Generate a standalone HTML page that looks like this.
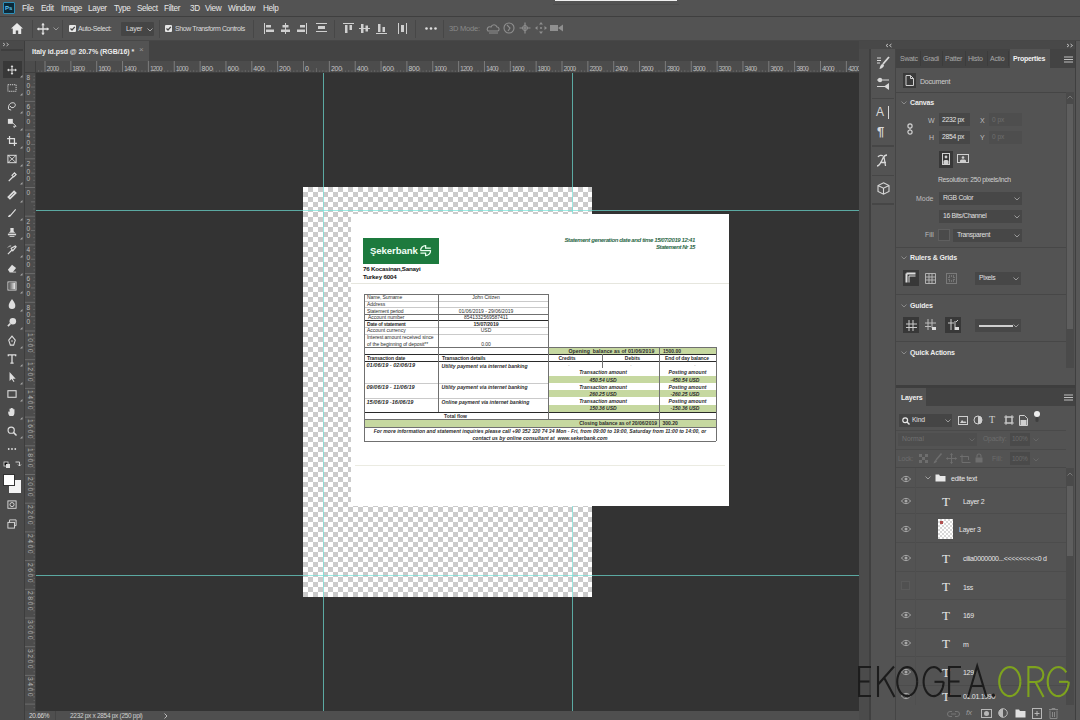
<!DOCTYPE html><html><head><meta charset="utf-8"><style>
*{margin:0;padding:0;box-sizing:border-box}
html,body{width:1080px;height:720px;overflow:hidden;background:#535353;font-family:"Liberation Sans",sans-serif;color:#ddd;position:relative}
.a{position:absolute}
.t{position:absolute;white-space:nowrap;line-height:1}
svg{position:absolute;overflow:visible}
</style></head><body><div class="a" style="left:0px;top:0px;width:1080px;height:16px;background:#535353;"></div>
<div class="a" style="left:0px;top:16px;width:1080px;height:1px;background:#3f3f3f;"></div>
<div class="a" style="left:0px;top:17px;width:1080px;height:23px;background:#535353;"></div>
<div class="a" style="left:0px;top:40px;width:1080px;height:1px;background:#474747;"></div>
<div class="a" style="left:3px;top:2px;width:12px;height:12px;background:#0b2a3a;border:1px solid #2d8fb8;border-radius:1px"></div>
<div class="t" style="left:5px;top:5px;font-size:6px;color:#5fc8f5;font-weight:bold">Ps</div>
<div class="t" style="left:22px;top:4.8px;font-size:8.2px;color:#e8e8e8;letter-spacing:-0.35px">File</div>
<div class="t" style="left:41px;top:4.8px;font-size:8.2px;color:#e8e8e8;letter-spacing:-0.35px">Edit</div>
<div class="t" style="left:61px;top:4.8px;font-size:8.2px;color:#e8e8e8;letter-spacing:-0.35px">Image</div>
<div class="t" style="left:88px;top:4.8px;font-size:8.2px;color:#e8e8e8;letter-spacing:-0.35px">Layer</div>
<div class="t" style="left:114px;top:4.8px;font-size:8.2px;color:#e8e8e8;letter-spacing:-0.35px">Type</div>
<div class="t" style="left:137px;top:4.8px;font-size:8.2px;color:#e8e8e8;letter-spacing:-0.35px">Select</div>
<div class="t" style="left:164px;top:4.8px;font-size:8.2px;color:#e8e8e8;letter-spacing:-0.35px">Filter</div>
<div class="t" style="left:190px;top:4.8px;font-size:8.2px;color:#e8e8e8;letter-spacing:-0.35px">3D</div>
<div class="t" style="left:205px;top:4.8px;font-size:8.2px;color:#e8e8e8;letter-spacing:-0.35px">View</div>
<div class="t" style="left:228px;top:4.8px;font-size:8.2px;color:#e8e8e8;letter-spacing:-0.35px">Window</div>
<div class="t" style="left:263px;top:4.8px;font-size:8.2px;color:#e8e8e8;letter-spacing:-0.35px">Help</div>
<div class="a" style="left:555px;top:0px;width:122px;height:1.4px;background:#f0f0f0;"></div>
<div class="a" style="left:553px;top:4px;width:126px;height:1px;background:#4c4c4c;"></div>
<svg style="left:11px;top:23px;" width="12" height="11" viewBox="0 0 12 11"><path d="M6 0 L0 5.5 H1.8 V11 H4.8 V7.5 H7.2 V11 H10.2 V5.5 H12 Z" fill="#e8e8e8"/></svg>
<div class="a" style="left:32px;top:20px;width:1px;height:18px;background:#474747;"></div>
<svg style="left:37px;top:23px;" width="12" height="12" viewBox="0 0 12 12"><path d="M6 0.5V11.5M0.5 6H11.5" stroke="#e0e0e0" stroke-width="1.3"/><path d="M6 0 L4.2 2.2H7.8Z M6 12 L4.2 9.8H7.8Z M0 6 L2.2 4.2V7.8Z M12 6 L9.8 4.2V7.8Z" fill="#e0e0e0"/></svg>
<svg style="left:53px;top:27px;" width="6" height="4" viewBox="0 0 6 4"><path d="M0.5 0.5 L3 3 L5.5 0.5" stroke="#999" stroke-width="1" fill="none"/></svg>
<div class="a" style="left:62px;top:20px;width:1px;height:18px;background:#474747;"></div>
<div class="a" style="left:69px;top:25px;width:7px;height:7px;background:#e6e6e6;border-radius:1px"></div>
<svg style="left:69px;top:25px;" width="7" height="7" viewBox="0 0 7 7"><path d="M1.5 3.5 L3 5 L5.8 1.8" stroke="#444" stroke-width="1.2" fill="none"/></svg>
<div class="t" style="left:78px;top:25px;font-size:7px;color:#dcdcdc;letter-spacing:-0.4px">Auto-Select:</div>
<div class="a" style="left:121px;top:22px;width:33px;height:14px;background:#454545;border-radius:1px"></div>
<div class="t" style="left:126px;top:25px;font-size:7px;color:#dcdcdc;letter-spacing:-0.3px">Layer</div>
<svg style="left:147px;top:28px;" width="6" height="4" viewBox="0 0 6 4"><path d="M0.5 0.5 L3 3 L5.5 0.5" stroke="#aaa" stroke-width="1" fill="none"/></svg>
<div class="a" style="left:159px;top:20px;width:1px;height:18px;background:#474747;"></div>
<div class="a" style="left:165px;top:25px;width:7px;height:7px;background:#e6e6e6;border-radius:1px"></div>
<svg style="left:165px;top:25px;" width="7" height="7" viewBox="0 0 7 7"><path d="M1.5 3.5 L3 5 L5.8 1.8" stroke="#444" stroke-width="1.2" fill="none"/></svg>
<div class="t" style="left:175px;top:25px;font-size:7px;color:#dcdcdc;letter-spacing:-0.4px">Show Transform Controls</div>
<div class="a" style="left:253px;top:20px;width:1px;height:18px;background:#474747;"></div>
<svg style="left:264px;top:23px;" width="11" height="11" viewBox="0 0 11 11"><rect x="0" y="0" width="1" height="11" fill="#cfcfcf"/><rect x="2" y="2" width="5" height="2.5" fill="#cfcfcf"/><rect x="2" y="6.5" width="8" height="2.5" fill="#cfcfcf"/></svg>
<svg style="left:280px;top:23px;" width="11" height="11" viewBox="0 0 11 11"><rect x="5" y="0" width="1" height="11" fill="#cfcfcf"/><rect x="2.5" y="2" width="6" height="2.5" fill="#cfcfcf"/><rect x="1" y="6.5" width="9" height="2.5" fill="#cfcfcf"/></svg>
<svg style="left:296px;top:23px;" width="11" height="11" viewBox="0 0 11 11"><rect x="10" y="0" width="1" height="11" fill="#cfcfcf"/><rect x="4" y="2" width="5" height="2.5" fill="#cfcfcf"/><rect x="1" y="6.5" width="8" height="2.5" fill="#cfcfcf"/></svg>
<svg style="left:316px;top:23px;" width="11" height="11" viewBox="0 0 11 11"><rect x="0" y="0" width="11" height="1" fill="#cfcfcf"/><rect x="2" y="3" width="7" height="3" fill="#cfcfcf"/><rect x="0" y="8" width="11" height="1" fill="#cfcfcf"/></svg>
<svg style="left:343px;top:23px;" width="11" height="11" viewBox="0 0 11 11"><rect x="0" y="0" width="11" height="1" fill="#cfcfcf"/><rect x="2" y="2" width="2.5" height="8" fill="#cfcfcf"/><rect x="6.5" y="2" width="2.5" height="5" fill="#cfcfcf"/></svg>
<svg style="left:359px;top:23px;" width="11" height="11" viewBox="0 0 11 11"><rect x="0" y="5" width="11" height="1" fill="#cfcfcf"/><rect x="2" y="1" width="2.5" height="9" fill="#cfcfcf"/><rect x="6.5" y="2.5" width="2.5" height="6" fill="#cfcfcf"/></svg>
<svg style="left:376px;top:23px;" width="11" height="11" viewBox="0 0 11 11"><rect x="0" y="10" width="11" height="1" fill="#cfcfcf"/><rect x="2" y="1" width="2.5" height="8" fill="#cfcfcf"/><rect x="6.5" y="4" width="2.5" height="5" fill="#cfcfcf"/></svg>
<svg style="left:398px;top:23px;" width="11" height="11" viewBox="0 0 11 11"><rect x="0" y="0" width="1" height="11" fill="#cfcfcf"/><rect x="3" y="2" width="3" height="7" fill="#cfcfcf"/><rect x="8" y="0" width="1" height="11" fill="#cfcfcf"/></svg>
<div class="a" style="left:334px;top:20px;width:1px;height:18px;background:#474747;"></div>
<div class="a" style="left:415px;top:20px;width:1px;height:18px;background:#474747;"></div>
<svg style="left:425px;top:27px;" width="12" height="3" viewBox="0 0 12 3"><circle cx="1.5" cy="1.5" r="1.3" fill="#e0e0e0"/><circle cx="6" cy="1.5" r="1.3" fill="#e0e0e0"/><circle cx="10.5" cy="1.5" r="1.3" fill="#e0e0e0"/></svg>
<div class="a" style="left:443px;top:20px;width:1px;height:18px;background:#474747;"></div>
<div class="t" style="left:449px;top:25px;font-size:7.5px;color:#8a8a8a;letter-spacing:-0.2px">3D Mode:</div>
<svg style="left:486px;top:23px;" width="14" height="12" viewBox="0 0 14 12"><path d="M2 8 C0 6 2 3 5 4 C6 1 10 1 11 4 C13 4 14 7 12 8 Z" stroke="#8f8f8f" fill="none" stroke-width="1.1"/><path d="M3 10 L12 10" stroke="#8f8f8f" stroke-width="1"/></svg>
<svg style="left:503px;top:22px;" width="12" height="12" viewBox="0 0 12 12"><circle cx="6" cy="6" r="5" stroke="#8f8f8f" fill="none" stroke-width="1.1"/><path d="M4 3 L7 6 L5 9" stroke="#8f8f8f" fill="none" stroke-width="1.1"/></svg>
<svg style="left:519px;top:22px;" width="12" height="12" viewBox="0 0 12 12"><path d="M6 0.5V11.5M0.5 6H11.5" stroke="#8f8f8f" stroke-width="1.2"/><circle cx="6" cy="6" r="2.5" stroke="#8f8f8f" fill="none"/></svg>
<svg style="left:535px;top:22px;" width="12" height="12" viewBox="0 0 12 12"><path d="M6 0 L4 2.5H8Z M6 12 L4 9.5H8Z M0 6 L2.5 4V8Z M12 6 L9.5 4V8Z" fill="#8f8f8f"/><circle cx="6" cy="6" r="1" fill="#8f8f8f"/></svg>
<svg style="left:550px;top:24px;" width="14" height="8" viewBox="0 0 14 8"><rect x="0" y="1" width="8" height="6" fill="#8f8f8f"/><path d="M8 4 L13 0.5 V7.5Z" fill="#8f8f8f"/></svg>
<div class="a" style="left:0px;top:41px;width:24px;height:679px;background:#4a4a4a;"></div>
<div class="a" style="left:24px;top:41px;width:1px;height:679px;background:#3d3d3d;"></div>
<div class="a" style="left:25px;top:41px;width:834px;height:20px;background:#434343;"></div>
<div class="a" style="left:25px;top:41px;width:124px;height:20px;background:#535353;"></div>
<div class="t" style="left:32px;top:47.8px;font-size:7px;color:#ececec;font-weight:bold;letter-spacing:-0.05px">Italy id.psd @ 20.7% (RGB/16) *</div>
<div class="t" style="left:139px;top:46px;font-size:8px;color:#9a9a9a;">&#215;</div>
<div class="a" style="left:25px;top:61px;width:834px;height:12px;background:#4c4c4c;"></div>
<div class="a" style="left:25px;top:73px;width:11px;height:638px;background:#4c4c4c;"></div>
<div class="a" style="left:25px;top:72px;width:834px;height:1px;background:#3e3e3e;"></div>
<div class="a" style="left:35px;top:61px;width:1px;height:650px;background:#3e3e3e;"></div>
<svg style="left:36px;top:61px;" width="823" height="11" viewBox="0 0 823 11"><rect x="2.04" y="9" width="1" height="2" fill="#626262"/><rect x="5.27" y="9.5" width="1" height="1.5" fill="#626262"/><rect x="8.50" y="0" width="1" height="11" fill="#7c7c7c"/><rect x="11.73" y="9.5" width="1" height="1.5" fill="#626262"/><rect x="14.96" y="9" width="1" height="2" fill="#626262"/><rect x="18.19" y="9.5" width="1" height="1.5" fill="#626262"/><rect x="21.42" y="7" width="1" height="4" fill="#6a6a6a"/><rect x="24.66" y="9.5" width="1" height="1.5" fill="#626262"/><rect x="27.89" y="9" width="1" height="2" fill="#626262"/><rect x="31.12" y="9.5" width="1" height="1.5" fill="#626262"/><rect x="34.35" y="0" width="1" height="11" fill="#7c7c7c"/><rect x="37.58" y="9.5" width="1" height="1.5" fill="#626262"/><rect x="40.81" y="9" width="1" height="2" fill="#626262"/><rect x="44.04" y="9.5" width="1" height="1.5" fill="#626262"/><rect x="47.27" y="7" width="1" height="4" fill="#6a6a6a"/><rect x="50.51" y="9.5" width="1" height="1.5" fill="#626262"/><rect x="53.74" y="9" width="1" height="2" fill="#626262"/><rect x="56.97" y="9.5" width="1" height="1.5" fill="#626262"/><rect x="60.20" y="0" width="1" height="11" fill="#7c7c7c"/><rect x="63.43" y="9.5" width="1" height="1.5" fill="#626262"/><rect x="66.66" y="9" width="1" height="2" fill="#626262"/><rect x="69.89" y="9.5" width="1" height="1.5" fill="#626262"/><rect x="73.12" y="7" width="1" height="4" fill="#6a6a6a"/><rect x="76.36" y="9.5" width="1" height="1.5" fill="#626262"/><rect x="79.59" y="9" width="1" height="2" fill="#626262"/><rect x="82.82" y="9.5" width="1" height="1.5" fill="#626262"/><rect x="86.05" y="0" width="1" height="11" fill="#7c7c7c"/><rect x="89.28" y="9.5" width="1" height="1.5" fill="#626262"/><rect x="92.51" y="9" width="1" height="2" fill="#626262"/><rect x="95.74" y="9.5" width="1" height="1.5" fill="#626262"/><rect x="98.97" y="7" width="1" height="4" fill="#6a6a6a"/><rect x="102.21" y="9.5" width="1" height="1.5" fill="#626262"/><rect x="105.44" y="9" width="1" height="2" fill="#626262"/><rect x="108.67" y="9.5" width="1" height="1.5" fill="#626262"/><rect x="111.90" y="0" width="1" height="11" fill="#7c7c7c"/><rect x="115.13" y="9.5" width="1" height="1.5" fill="#626262"/><rect x="118.36" y="9" width="1" height="2" fill="#626262"/><rect x="121.59" y="9.5" width="1" height="1.5" fill="#626262"/><rect x="124.82" y="7" width="1" height="4" fill="#6a6a6a"/><rect x="128.06" y="9.5" width="1" height="1.5" fill="#626262"/><rect x="131.29" y="9" width="1" height="2" fill="#626262"/><rect x="134.52" y="9.5" width="1" height="1.5" fill="#626262"/><rect x="137.75" y="0" width="1" height="11" fill="#7c7c7c"/><rect x="140.98" y="9.5" width="1" height="1.5" fill="#626262"/><rect x="144.21" y="9" width="1" height="2" fill="#626262"/><rect x="147.44" y="9.5" width="1" height="1.5" fill="#626262"/><rect x="150.68" y="7" width="1" height="4" fill="#6a6a6a"/><rect x="153.91" y="9.5" width="1" height="1.5" fill="#626262"/><rect x="157.14" y="9" width="1" height="2" fill="#626262"/><rect x="160.37" y="9.5" width="1" height="1.5" fill="#626262"/><rect x="163.60" y="0" width="1" height="11" fill="#7c7c7c"/><rect x="166.83" y="9.5" width="1" height="1.5" fill="#626262"/><rect x="170.06" y="9" width="1" height="2" fill="#626262"/><rect x="173.29" y="9.5" width="1" height="1.5" fill="#626262"/><rect x="176.53" y="7" width="1" height="4" fill="#6a6a6a"/><rect x="179.76" y="9.5" width="1" height="1.5" fill="#626262"/><rect x="182.99" y="9" width="1" height="2" fill="#626262"/><rect x="186.22" y="9.5" width="1" height="1.5" fill="#626262"/><rect x="189.45" y="0" width="1" height="11" fill="#7c7c7c"/><rect x="192.68" y="9.5" width="1" height="1.5" fill="#626262"/><rect x="195.91" y="9" width="1" height="2" fill="#626262"/><rect x="199.14" y="9.5" width="1" height="1.5" fill="#626262"/><rect x="202.38" y="7" width="1" height="4" fill="#6a6a6a"/><rect x="205.61" y="9.5" width="1" height="1.5" fill="#626262"/><rect x="208.84" y="9" width="1" height="2" fill="#626262"/><rect x="212.07" y="9.5" width="1" height="1.5" fill="#626262"/><rect x="215.30" y="0" width="1" height="11" fill="#7c7c7c"/><rect x="218.53" y="9.5" width="1" height="1.5" fill="#626262"/><rect x="221.76" y="9" width="1" height="2" fill="#626262"/><rect x="224.99" y="9.5" width="1" height="1.5" fill="#626262"/><rect x="228.23" y="7" width="1" height="4" fill="#6a6a6a"/><rect x="231.46" y="9.5" width="1" height="1.5" fill="#626262"/><rect x="234.69" y="9" width="1" height="2" fill="#626262"/><rect x="237.92" y="9.5" width="1" height="1.5" fill="#626262"/><rect x="241.15" y="0" width="1" height="11" fill="#7c7c7c"/><rect x="244.38" y="9.5" width="1" height="1.5" fill="#626262"/><rect x="247.61" y="9" width="1" height="2" fill="#626262"/><rect x="250.84" y="9.5" width="1" height="1.5" fill="#626262"/><rect x="254.07" y="7" width="1" height="4" fill="#6a6a6a"/><rect x="257.31" y="9.5" width="1" height="1.5" fill="#626262"/><rect x="260.54" y="9" width="1" height="2" fill="#626262"/><rect x="263.77" y="9.5" width="1" height="1.5" fill="#626262"/><rect x="267.00" y="0" width="1" height="11" fill="#7c7c7c"/><rect x="270.23" y="9.5" width="1" height="1.5" fill="#626262"/><rect x="273.46" y="9" width="1" height="2" fill="#626262"/><rect x="276.69" y="9.5" width="1" height="1.5" fill="#626262"/><rect x="279.93" y="7" width="1" height="4" fill="#6a6a6a"/><rect x="283.16" y="9.5" width="1" height="1.5" fill="#626262"/><rect x="286.39" y="9" width="1" height="2" fill="#626262"/><rect x="289.62" y="9.5" width="1" height="1.5" fill="#626262"/><rect x="292.85" y="0" width="1" height="11" fill="#7c7c7c"/><rect x="296.08" y="9.5" width="1" height="1.5" fill="#626262"/><rect x="299.31" y="9" width="1" height="2" fill="#626262"/><rect x="302.54" y="9.5" width="1" height="1.5" fill="#626262"/><rect x="305.78" y="7" width="1" height="4" fill="#6a6a6a"/><rect x="309.01" y="9.5" width="1" height="1.5" fill="#626262"/><rect x="312.24" y="9" width="1" height="2" fill="#626262"/><rect x="315.47" y="9.5" width="1" height="1.5" fill="#626262"/><rect x="318.70" y="0" width="1" height="11" fill="#7c7c7c"/><rect x="321.93" y="9.5" width="1" height="1.5" fill="#626262"/><rect x="325.16" y="9" width="1" height="2" fill="#626262"/><rect x="328.39" y="9.5" width="1" height="1.5" fill="#626262"/><rect x="331.62" y="7" width="1" height="4" fill="#6a6a6a"/><rect x="334.86" y="9.5" width="1" height="1.5" fill="#626262"/><rect x="338.09" y="9" width="1" height="2" fill="#626262"/><rect x="341.32" y="9.5" width="1" height="1.5" fill="#626262"/><rect x="344.55" y="0" width="1" height="11" fill="#7c7c7c"/><rect x="347.78" y="9.5" width="1" height="1.5" fill="#626262"/><rect x="351.01" y="9" width="1" height="2" fill="#626262"/><rect x="354.24" y="9.5" width="1" height="1.5" fill="#626262"/><rect x="357.48" y="7" width="1" height="4" fill="#6a6a6a"/><rect x="360.71" y="9.5" width="1" height="1.5" fill="#626262"/><rect x="363.94" y="9" width="1" height="2" fill="#626262"/><rect x="367.17" y="9.5" width="1" height="1.5" fill="#626262"/><rect x="370.40" y="0" width="1" height="11" fill="#7c7c7c"/><rect x="373.63" y="9.5" width="1" height="1.5" fill="#626262"/><rect x="376.86" y="9" width="1" height="2" fill="#626262"/><rect x="380.09" y="9.5" width="1" height="1.5" fill="#626262"/><rect x="383.32" y="7" width="1" height="4" fill="#6a6a6a"/><rect x="386.56" y="9.5" width="1" height="1.5" fill="#626262"/><rect x="389.79" y="9" width="1" height="2" fill="#626262"/><rect x="393.02" y="9.5" width="1" height="1.5" fill="#626262"/><rect x="396.25" y="0" width="1" height="11" fill="#7c7c7c"/><rect x="399.48" y="9.5" width="1" height="1.5" fill="#626262"/><rect x="402.71" y="9" width="1" height="2" fill="#626262"/><rect x="405.94" y="9.5" width="1" height="1.5" fill="#626262"/><rect x="409.18" y="7" width="1" height="4" fill="#6a6a6a"/><rect x="412.41" y="9.5" width="1" height="1.5" fill="#626262"/><rect x="415.64" y="9" width="1" height="2" fill="#626262"/><rect x="418.87" y="9.5" width="1" height="1.5" fill="#626262"/><rect x="422.10" y="0" width="1" height="11" fill="#7c7c7c"/><rect x="425.33" y="9.5" width="1" height="1.5" fill="#626262"/><rect x="428.56" y="9" width="1" height="2" fill="#626262"/><rect x="431.79" y="9.5" width="1" height="1.5" fill="#626262"/><rect x="435.03" y="7" width="1" height="4" fill="#6a6a6a"/><rect x="438.26" y="9.5" width="1" height="1.5" fill="#626262"/><rect x="441.49" y="9" width="1" height="2" fill="#626262"/><rect x="444.72" y="9.5" width="1" height="1.5" fill="#626262"/><rect x="447.95" y="0" width="1" height="11" fill="#7c7c7c"/><rect x="451.18" y="9.5" width="1" height="1.5" fill="#626262"/><rect x="454.41" y="9" width="1" height="2" fill="#626262"/><rect x="457.64" y="9.5" width="1" height="1.5" fill="#626262"/><rect x="460.88" y="7" width="1" height="4" fill="#6a6a6a"/><rect x="464.11" y="9.5" width="1" height="1.5" fill="#626262"/><rect x="467.34" y="9" width="1" height="2" fill="#626262"/><rect x="470.57" y="9.5" width="1" height="1.5" fill="#626262"/><rect x="473.80" y="0" width="1" height="11" fill="#7c7c7c"/><rect x="477.03" y="9.5" width="1" height="1.5" fill="#626262"/><rect x="480.26" y="9" width="1" height="2" fill="#626262"/><rect x="483.49" y="9.5" width="1" height="1.5" fill="#626262"/><rect x="486.73" y="7" width="1" height="4" fill="#6a6a6a"/><rect x="489.96" y="9.5" width="1" height="1.5" fill="#626262"/><rect x="493.19" y="9" width="1" height="2" fill="#626262"/><rect x="496.42" y="9.5" width="1" height="1.5" fill="#626262"/><rect x="499.65" y="0" width="1" height="11" fill="#7c7c7c"/><rect x="502.88" y="9.5" width="1" height="1.5" fill="#626262"/><rect x="506.11" y="9" width="1" height="2" fill="#626262"/><rect x="509.34" y="9.5" width="1" height="1.5" fill="#626262"/><rect x="512.57" y="7" width="1" height="4" fill="#6a6a6a"/><rect x="515.81" y="9.5" width="1" height="1.5" fill="#626262"/><rect x="519.04" y="9" width="1" height="2" fill="#626262"/><rect x="522.27" y="9.5" width="1" height="1.5" fill="#626262"/><rect x="525.50" y="0" width="1" height="11" fill="#7c7c7c"/><rect x="528.73" y="9.5" width="1" height="1.5" fill="#626262"/><rect x="531.96" y="9" width="1" height="2" fill="#626262"/><rect x="535.19" y="9.5" width="1" height="1.5" fill="#626262"/><rect x="538.42" y="7" width="1" height="4" fill="#6a6a6a"/><rect x="541.66" y="9.5" width="1" height="1.5" fill="#626262"/><rect x="544.89" y="9" width="1" height="2" fill="#626262"/><rect x="548.12" y="9.5" width="1" height="1.5" fill="#626262"/><rect x="551.35" y="0" width="1" height="11" fill="#7c7c7c"/><rect x="554.58" y="9.5" width="1" height="1.5" fill="#626262"/><rect x="557.81" y="9" width="1" height="2" fill="#626262"/><rect x="561.04" y="9.5" width="1" height="1.5" fill="#626262"/><rect x="564.27" y="7" width="1" height="4" fill="#6a6a6a"/><rect x="567.51" y="9.5" width="1" height="1.5" fill="#626262"/><rect x="570.74" y="9" width="1" height="2" fill="#626262"/><rect x="573.97" y="9.5" width="1" height="1.5" fill="#626262"/><rect x="577.20" y="0" width="1" height="11" fill="#7c7c7c"/><rect x="580.43" y="9.5" width="1" height="1.5" fill="#626262"/><rect x="583.66" y="9" width="1" height="2" fill="#626262"/><rect x="586.89" y="9.5" width="1" height="1.5" fill="#626262"/><rect x="590.12" y="7" width="1" height="4" fill="#6a6a6a"/><rect x="593.36" y="9.5" width="1" height="1.5" fill="#626262"/><rect x="596.59" y="9" width="1" height="2" fill="#626262"/><rect x="599.82" y="9.5" width="1" height="1.5" fill="#626262"/><rect x="603.05" y="0" width="1" height="11" fill="#7c7c7c"/><rect x="606.28" y="9.5" width="1" height="1.5" fill="#626262"/><rect x="609.51" y="9" width="1" height="2" fill="#626262"/><rect x="612.74" y="9.5" width="1" height="1.5" fill="#626262"/><rect x="615.97" y="7" width="1" height="4" fill="#6a6a6a"/><rect x="619.21" y="9.5" width="1" height="1.5" fill="#626262"/><rect x="622.44" y="9" width="1" height="2" fill="#626262"/><rect x="625.67" y="9.5" width="1" height="1.5" fill="#626262"/><rect x="628.90" y="0" width="1" height="11" fill="#7c7c7c"/><rect x="632.13" y="9.5" width="1" height="1.5" fill="#626262"/><rect x="635.36" y="9" width="1" height="2" fill="#626262"/><rect x="638.59" y="9.5" width="1" height="1.5" fill="#626262"/><rect x="641.83" y="7" width="1" height="4" fill="#6a6a6a"/><rect x="645.06" y="9.5" width="1" height="1.5" fill="#626262"/><rect x="648.29" y="9" width="1" height="2" fill="#626262"/><rect x="651.52" y="9.5" width="1" height="1.5" fill="#626262"/><rect x="654.75" y="0" width="1" height="11" fill="#7c7c7c"/><rect x="657.98" y="9.5" width="1" height="1.5" fill="#626262"/><rect x="661.21" y="9" width="1" height="2" fill="#626262"/><rect x="664.44" y="9.5" width="1" height="1.5" fill="#626262"/><rect x="667.67" y="7" width="1" height="4" fill="#6a6a6a"/><rect x="670.91" y="9.5" width="1" height="1.5" fill="#626262"/><rect x="674.14" y="9" width="1" height="2" fill="#626262"/><rect x="677.37" y="9.5" width="1" height="1.5" fill="#626262"/><rect x="680.60" y="0" width="1" height="11" fill="#7c7c7c"/><rect x="683.83" y="9.5" width="1" height="1.5" fill="#626262"/><rect x="687.06" y="9" width="1" height="2" fill="#626262"/><rect x="690.29" y="9.5" width="1" height="1.5" fill="#626262"/><rect x="693.52" y="7" width="1" height="4" fill="#6a6a6a"/><rect x="696.76" y="9.5" width="1" height="1.5" fill="#626262"/><rect x="699.99" y="9" width="1" height="2" fill="#626262"/><rect x="703.22" y="9.5" width="1" height="1.5" fill="#626262"/><rect x="706.45" y="0" width="1" height="11" fill="#7c7c7c"/><rect x="709.68" y="9.5" width="1" height="1.5" fill="#626262"/><rect x="712.91" y="9" width="1" height="2" fill="#626262"/><rect x="716.14" y="9.5" width="1" height="1.5" fill="#626262"/><rect x="719.38" y="7" width="1" height="4" fill="#6a6a6a"/><rect x="722.61" y="9.5" width="1" height="1.5" fill="#626262"/><rect x="725.84" y="9" width="1" height="2" fill="#626262"/><rect x="729.07" y="9.5" width="1" height="1.5" fill="#626262"/><rect x="732.30" y="0" width="1" height="11" fill="#7c7c7c"/><rect x="735.53" y="9.5" width="1" height="1.5" fill="#626262"/><rect x="738.76" y="9" width="1" height="2" fill="#626262"/><rect x="741.99" y="9.5" width="1" height="1.5" fill="#626262"/><rect x="745.22" y="7" width="1" height="4" fill="#6a6a6a"/><rect x="748.46" y="9.5" width="1" height="1.5" fill="#626262"/><rect x="751.69" y="9" width="1" height="2" fill="#626262"/><rect x="754.92" y="9.5" width="1" height="1.5" fill="#626262"/><rect x="758.15" y="0" width="1" height="11" fill="#7c7c7c"/><rect x="761.38" y="9.5" width="1" height="1.5" fill="#626262"/><rect x="764.61" y="9" width="1" height="2" fill="#626262"/><rect x="767.84" y="9.5" width="1" height="1.5" fill="#626262"/><rect x="771.08" y="7" width="1" height="4" fill="#6a6a6a"/><rect x="774.31" y="9.5" width="1" height="1.5" fill="#626262"/><rect x="777.54" y="9" width="1" height="2" fill="#626262"/><rect x="780.77" y="9.5" width="1" height="1.5" fill="#626262"/><rect x="784.00" y="0" width="1" height="11" fill="#7c7c7c"/><rect x="787.23" y="9.5" width="1" height="1.5" fill="#626262"/><rect x="790.46" y="9" width="1" height="2" fill="#626262"/><rect x="793.69" y="9.5" width="1" height="1.5" fill="#626262"/><rect x="796.92" y="7" width="1" height="4" fill="#6a6a6a"/><rect x="800.16" y="9.5" width="1" height="1.5" fill="#626262"/><rect x="803.39" y="9" width="1" height="2" fill="#626262"/><rect x="806.62" y="9.5" width="1" height="1.5" fill="#626262"/><rect x="809.85" y="0" width="1" height="11" fill="#7c7c7c"/><rect x="813.08" y="9.5" width="1" height="1.5" fill="#626262"/><rect x="816.31" y="9" width="1" height="2" fill="#626262"/><rect x="819.54" y="9.5" width="1" height="1.5" fill="#626262"/></svg>
<div class="t" style="left:46.5px;top:64.6px;font-size:7px;color:#b8b8b8;letter-spacing:-0.95px">2000</div>
<div class="t" style="left:72.3px;top:64.6px;font-size:7px;color:#b8b8b8;letter-spacing:-0.95px">1800</div>
<div class="t" style="left:98.2px;top:64.6px;font-size:7px;color:#b8b8b8;letter-spacing:-0.95px">1600</div>
<div class="t" style="left:124.0px;top:64.6px;font-size:7px;color:#b8b8b8;letter-spacing:-0.95px">1400</div>
<div class="t" style="left:149.9px;top:64.6px;font-size:7px;color:#b8b8b8;letter-spacing:-0.95px">1200</div>
<div class="t" style="left:175.8px;top:64.6px;font-size:7px;color:#b8b8b8;letter-spacing:-0.95px">1000</div>
<div class="t" style="left:201.6px;top:64.6px;font-size:7px;color:#c4c4c4;letter-spacing:-0.2px">800</div>
<div class="t" style="left:227.4px;top:64.6px;font-size:7px;color:#c4c4c4;letter-spacing:-0.2px">600</div>
<div class="t" style="left:253.3px;top:64.6px;font-size:7px;color:#c4c4c4;letter-spacing:-0.2px">400</div>
<div class="t" style="left:279.1px;top:64.6px;font-size:7px;color:#c4c4c4;letter-spacing:-0.2px">200</div>
<div class="t" style="left:305.0px;top:64.6px;font-size:7px;color:#c4c4c4;letter-spacing:-0.2px">0</div>
<div class="t" style="left:330.9px;top:64.6px;font-size:7px;color:#c4c4c4;letter-spacing:-0.2px">200</div>
<div class="t" style="left:356.7px;top:64.6px;font-size:7px;color:#c4c4c4;letter-spacing:-0.2px">400</div>
<div class="t" style="left:382.6px;top:64.6px;font-size:7px;color:#c4c4c4;letter-spacing:-0.2px">600</div>
<div class="t" style="left:408.4px;top:64.6px;font-size:7px;color:#c4c4c4;letter-spacing:-0.2px">800</div>
<div class="t" style="left:434.2px;top:64.6px;font-size:7px;color:#b8b8b8;letter-spacing:-0.95px">1000</div>
<div class="t" style="left:460.1px;top:64.6px;font-size:7px;color:#b8b8b8;letter-spacing:-0.95px">1200</div>
<div class="t" style="left:486.0px;top:64.6px;font-size:7px;color:#b8b8b8;letter-spacing:-0.95px">1400</div>
<div class="t" style="left:511.8px;top:64.6px;font-size:7px;color:#b8b8b8;letter-spacing:-0.95px">1600</div>
<div class="t" style="left:537.6px;top:64.6px;font-size:7px;color:#b8b8b8;letter-spacing:-0.95px">1800</div>
<div class="t" style="left:563.5px;top:64.6px;font-size:7px;color:#b8b8b8;letter-spacing:-0.95px">2000</div>
<div class="t" style="left:589.4px;top:64.6px;font-size:7px;color:#b8b8b8;letter-spacing:-0.95px">2200</div>
<div class="t" style="left:615.2px;top:64.6px;font-size:7px;color:#b8b8b8;letter-spacing:-0.95px">2400</div>
<div class="t" style="left:641.0px;top:64.6px;font-size:7px;color:#b8b8b8;letter-spacing:-0.95px">2600</div>
<div class="t" style="left:666.9px;top:64.6px;font-size:7px;color:#b8b8b8;letter-spacing:-0.95px">2800</div>
<div class="t" style="left:692.8px;top:64.6px;font-size:7px;color:#b8b8b8;letter-spacing:-0.95px">3000</div>
<div class="t" style="left:718.6px;top:64.6px;font-size:7px;color:#b8b8b8;letter-spacing:-0.95px">3200</div>
<div class="t" style="left:744.5px;top:64.6px;font-size:7px;color:#b8b8b8;letter-spacing:-0.95px">3400</div>
<div class="t" style="left:770.3px;top:64.6px;font-size:7px;color:#b8b8b8;letter-spacing:-0.95px">3600</div>
<div class="t" style="left:796.2px;top:64.6px;font-size:7px;color:#b8b8b8;letter-spacing:-0.95px">3800</div>
<div class="t" style="left:822.0px;top:64.6px;font-size:7px;color:#b8b8b8;letter-spacing:-0.95px">4000</div>
<div class="t" style="left:847.9px;top:64.6px;font-size:7px;color:#b8b8b8;letter-spacing:-0.95px">4200</div>
<svg style="left:25px;top:73px;" width="10" height="638" viewBox="0 0 10 638"><rect x="8.5" y="2.79" width="1.5" height="1" fill="#626262"/><rect x="8" y="6.38" width="2" height="1" fill="#626262"/><rect x="8.5" y="9.96" width="1.5" height="1" fill="#626262"/><rect x="6" y="13.55" width="4" height="1" fill="#6a6a6a"/><rect x="8.5" y="17.14" width="1.5" height="1" fill="#626262"/><rect x="8" y="20.72" width="2" height="1" fill="#626262"/><rect x="8.5" y="24.31" width="1.5" height="1" fill="#626262"/><rect x="0" y="27.90" width="10" height="1" fill="#6c6c6c"/><rect x="8.5" y="31.49" width="1.5" height="1" fill="#626262"/><rect x="8" y="35.08" width="2" height="1" fill="#626262"/><rect x="8.5" y="38.66" width="1.5" height="1" fill="#626262"/><rect x="6" y="42.25" width="4" height="1" fill="#6a6a6a"/><rect x="8.5" y="45.84" width="1.5" height="1" fill="#626262"/><rect x="8" y="49.43" width="2" height="1" fill="#626262"/><rect x="8.5" y="53.01" width="1.5" height="1" fill="#626262"/><rect x="0" y="56.60" width="10" height="1" fill="#6c6c6c"/><rect x="8.5" y="60.19" width="1.5" height="1" fill="#626262"/><rect x="8" y="63.78" width="2" height="1" fill="#626262"/><rect x="8.5" y="67.36" width="1.5" height="1" fill="#626262"/><rect x="6" y="70.95" width="4" height="1" fill="#6a6a6a"/><rect x="8.5" y="74.54" width="1.5" height="1" fill="#626262"/><rect x="8" y="78.12" width="2" height="1" fill="#626262"/><rect x="8.5" y="81.71" width="1.5" height="1" fill="#626262"/><rect x="0" y="85.30" width="10" height="1" fill="#6c6c6c"/><rect x="8.5" y="88.89" width="1.5" height="1" fill="#626262"/><rect x="8" y="92.48" width="2" height="1" fill="#626262"/><rect x="8.5" y="96.06" width="1.5" height="1" fill="#626262"/><rect x="6" y="99.65" width="4" height="1" fill="#6a6a6a"/><rect x="8.5" y="103.24" width="1.5" height="1" fill="#626262"/><rect x="8" y="106.83" width="2" height="1" fill="#626262"/><rect x="8.5" y="110.41" width="1.5" height="1" fill="#626262"/><rect x="0" y="114.00" width="10" height="1" fill="#6c6c6c"/><rect x="8.5" y="117.59" width="1.5" height="1" fill="#626262"/><rect x="8" y="121.18" width="2" height="1" fill="#626262"/><rect x="8.5" y="124.76" width="1.5" height="1" fill="#626262"/><rect x="6" y="128.35" width="4" height="1" fill="#6a6a6a"/><rect x="8.5" y="131.94" width="1.5" height="1" fill="#626262"/><rect x="8" y="135.53" width="2" height="1" fill="#626262"/><rect x="8.5" y="139.11" width="1.5" height="1" fill="#626262"/><rect x="0" y="142.70" width="10" height="1" fill="#6c6c6c"/><rect x="8.5" y="146.29" width="1.5" height="1" fill="#626262"/><rect x="8" y="149.88" width="2" height="1" fill="#626262"/><rect x="8.5" y="153.46" width="1.5" height="1" fill="#626262"/><rect x="6" y="157.05" width="4" height="1" fill="#6a6a6a"/><rect x="8.5" y="160.64" width="1.5" height="1" fill="#626262"/><rect x="8" y="164.22" width="2" height="1" fill="#626262"/><rect x="8.5" y="167.81" width="1.5" height="1" fill="#626262"/><rect x="0" y="171.40" width="10" height="1" fill="#6c6c6c"/><rect x="8.5" y="174.99" width="1.5" height="1" fill="#626262"/><rect x="8" y="178.58" width="2" height="1" fill="#626262"/><rect x="8.5" y="182.16" width="1.5" height="1" fill="#626262"/><rect x="6" y="185.75" width="4" height="1" fill="#6a6a6a"/><rect x="8.5" y="189.34" width="1.5" height="1" fill="#626262"/><rect x="8" y="192.93" width="2" height="1" fill="#626262"/><rect x="8.5" y="196.51" width="1.5" height="1" fill="#626262"/><rect x="0" y="200.10" width="10" height="1" fill="#6c6c6c"/><rect x="8.5" y="203.69" width="1.5" height="1" fill="#626262"/><rect x="8" y="207.28" width="2" height="1" fill="#626262"/><rect x="8.5" y="210.86" width="1.5" height="1" fill="#626262"/><rect x="6" y="214.45" width="4" height="1" fill="#6a6a6a"/><rect x="8.5" y="218.04" width="1.5" height="1" fill="#626262"/><rect x="8" y="221.62" width="2" height="1" fill="#626262"/><rect x="8.5" y="225.21" width="1.5" height="1" fill="#626262"/><rect x="0" y="228.80" width="10" height="1" fill="#6c6c6c"/><rect x="8.5" y="232.39" width="1.5" height="1" fill="#626262"/><rect x="8" y="235.98" width="2" height="1" fill="#626262"/><rect x="8.5" y="239.56" width="1.5" height="1" fill="#626262"/><rect x="6" y="243.15" width="4" height="1" fill="#6a6a6a"/><rect x="8.5" y="246.74" width="1.5" height="1" fill="#626262"/><rect x="8" y="250.32" width="2" height="1" fill="#626262"/><rect x="8.5" y="253.91" width="1.5" height="1" fill="#626262"/><rect x="0" y="257.50" width="10" height="1" fill="#6c6c6c"/><rect x="8.5" y="261.09" width="1.5" height="1" fill="#626262"/><rect x="8" y="264.68" width="2" height="1" fill="#626262"/><rect x="8.5" y="268.26" width="1.5" height="1" fill="#626262"/><rect x="6" y="271.85" width="4" height="1" fill="#6a6a6a"/><rect x="8.5" y="275.44" width="1.5" height="1" fill="#626262"/><rect x="8" y="279.02" width="2" height="1" fill="#626262"/><rect x="8.5" y="282.61" width="1.5" height="1" fill="#626262"/><rect x="0" y="286.20" width="10" height="1" fill="#6c6c6c"/><rect x="8.5" y="289.79" width="1.5" height="1" fill="#626262"/><rect x="8" y="293.38" width="2" height="1" fill="#626262"/><rect x="8.5" y="296.96" width="1.5" height="1" fill="#626262"/><rect x="6" y="300.55" width="4" height="1" fill="#6a6a6a"/><rect x="8.5" y="304.14" width="1.5" height="1" fill="#626262"/><rect x="8" y="307.72" width="2" height="1" fill="#626262"/><rect x="8.5" y="311.31" width="1.5" height="1" fill="#626262"/><rect x="0" y="314.90" width="10" height="1" fill="#6c6c6c"/><rect x="8.5" y="318.49" width="1.5" height="1" fill="#626262"/><rect x="8" y="322.07" width="2" height="1" fill="#626262"/><rect x="8.5" y="325.66" width="1.5" height="1" fill="#626262"/><rect x="6" y="329.25" width="4" height="1" fill="#6a6a6a"/><rect x="8.5" y="332.84" width="1.5" height="1" fill="#626262"/><rect x="8" y="336.42" width="2" height="1" fill="#626262"/><rect x="8.5" y="340.01" width="1.5" height="1" fill="#626262"/><rect x="0" y="343.60" width="10" height="1" fill="#6c6c6c"/><rect x="8.5" y="347.19" width="1.5" height="1" fill="#626262"/><rect x="8" y="350.78" width="2" height="1" fill="#626262"/><rect x="8.5" y="354.36" width="1.5" height="1" fill="#626262"/><rect x="6" y="357.95" width="4" height="1" fill="#6a6a6a"/><rect x="8.5" y="361.54" width="1.5" height="1" fill="#626262"/><rect x="8" y="365.12" width="2" height="1" fill="#626262"/><rect x="8.5" y="368.71" width="1.5" height="1" fill="#626262"/><rect x="0" y="372.30" width="10" height="1" fill="#6c6c6c"/><rect x="8.5" y="375.89" width="1.5" height="1" fill="#626262"/><rect x="8" y="379.48" width="2" height="1" fill="#626262"/><rect x="8.5" y="383.06" width="1.5" height="1" fill="#626262"/><rect x="6" y="386.65" width="4" height="1" fill="#6a6a6a"/><rect x="8.5" y="390.24" width="1.5" height="1" fill="#626262"/><rect x="8" y="393.82" width="2" height="1" fill="#626262"/><rect x="8.5" y="397.41" width="1.5" height="1" fill="#626262"/><rect x="0" y="401.00" width="10" height="1" fill="#6c6c6c"/><rect x="8.5" y="404.59" width="1.5" height="1" fill="#626262"/><rect x="8" y="408.18" width="2" height="1" fill="#626262"/><rect x="8.5" y="411.76" width="1.5" height="1" fill="#626262"/><rect x="6" y="415.35" width="4" height="1" fill="#6a6a6a"/><rect x="8.5" y="418.94" width="1.5" height="1" fill="#626262"/><rect x="8" y="422.52" width="2" height="1" fill="#626262"/><rect x="8.5" y="426.11" width="1.5" height="1" fill="#626262"/><rect x="0" y="429.70" width="10" height="1" fill="#6c6c6c"/><rect x="8.5" y="433.29" width="1.5" height="1" fill="#626262"/><rect x="8" y="436.88" width="2" height="1" fill="#626262"/><rect x="8.5" y="440.46" width="1.5" height="1" fill="#626262"/><rect x="6" y="444.05" width="4" height="1" fill="#6a6a6a"/><rect x="8.5" y="447.64" width="1.5" height="1" fill="#626262"/><rect x="8" y="451.23" width="2" height="1" fill="#626262"/><rect x="8.5" y="454.81" width="1.5" height="1" fill="#626262"/><rect x="0" y="458.40" width="10" height="1" fill="#6c6c6c"/><rect x="8.5" y="461.99" width="1.5" height="1" fill="#626262"/><rect x="8" y="465.57" width="2" height="1" fill="#626262"/><rect x="8.5" y="469.16" width="1.5" height="1" fill="#626262"/><rect x="6" y="472.75" width="4" height="1" fill="#6a6a6a"/><rect x="8.5" y="476.34" width="1.5" height="1" fill="#626262"/><rect x="8" y="479.92" width="2" height="1" fill="#626262"/><rect x="8.5" y="483.51" width="1.5" height="1" fill="#626262"/><rect x="0" y="487.10" width="10" height="1" fill="#6c6c6c"/><rect x="8.5" y="490.69" width="1.5" height="1" fill="#626262"/><rect x="8" y="494.27" width="2" height="1" fill="#626262"/><rect x="8.5" y="497.86" width="1.5" height="1" fill="#626262"/><rect x="6" y="501.45" width="4" height="1" fill="#6a6a6a"/><rect x="8.5" y="505.04" width="1.5" height="1" fill="#626262"/><rect x="8" y="508.62" width="2" height="1" fill="#626262"/><rect x="8.5" y="512.21" width="1.5" height="1" fill="#626262"/><rect x="0" y="515.80" width="10" height="1" fill="#6c6c6c"/><rect x="8.5" y="519.39" width="1.5" height="1" fill="#626262"/><rect x="8" y="522.97" width="2" height="1" fill="#626262"/><rect x="8.5" y="526.56" width="1.5" height="1" fill="#626262"/><rect x="6" y="530.15" width="4" height="1" fill="#6a6a6a"/><rect x="8.5" y="533.74" width="1.5" height="1" fill="#626262"/><rect x="8" y="537.32" width="2" height="1" fill="#626262"/><rect x="8.5" y="540.91" width="1.5" height="1" fill="#626262"/><rect x="0" y="544.50" width="10" height="1" fill="#6c6c6c"/><rect x="8.5" y="548.09" width="1.5" height="1" fill="#626262"/><rect x="8" y="551.67" width="2" height="1" fill="#626262"/><rect x="8.5" y="555.26" width="1.5" height="1" fill="#626262"/><rect x="6" y="558.85" width="4" height="1" fill="#6a6a6a"/><rect x="8.5" y="562.44" width="1.5" height="1" fill="#626262"/><rect x="8" y="566.02" width="2" height="1" fill="#626262"/><rect x="8.5" y="569.61" width="1.5" height="1" fill="#626262"/><rect x="0" y="573.20" width="10" height="1" fill="#6c6c6c"/><rect x="8.5" y="576.79" width="1.5" height="1" fill="#626262"/><rect x="8" y="580.38" width="2" height="1" fill="#626262"/><rect x="8.5" y="583.96" width="1.5" height="1" fill="#626262"/><rect x="6" y="587.55" width="4" height="1" fill="#6a6a6a"/><rect x="8.5" y="591.14" width="1.5" height="1" fill="#626262"/><rect x="8" y="594.73" width="2" height="1" fill="#626262"/><rect x="8.5" y="598.31" width="1.5" height="1" fill="#626262"/><rect x="0" y="601.90" width="10" height="1" fill="#6c6c6c"/><rect x="8.5" y="605.49" width="1.5" height="1" fill="#626262"/><rect x="8" y="609.07" width="2" height="1" fill="#626262"/><rect x="8.5" y="612.66" width="1.5" height="1" fill="#626262"/><rect x="6" y="616.25" width="4" height="1" fill="#6a6a6a"/><rect x="8.5" y="619.84" width="1.5" height="1" fill="#626262"/><rect x="8" y="623.42" width="2" height="1" fill="#626262"/><rect x="8.5" y="627.01" width="1.5" height="1" fill="#626262"/><rect x="0" y="630.60" width="10" height="1" fill="#6c6c6c"/><rect x="8.5" y="634.19" width="1.5" height="1" fill="#626262"/><rect x="8" y="637.77" width="2" height="1" fill="#626262"/></svg>
<div class="t" style="left:26.5px;top:75.2px;font-size:6.5px;color:#bdbdbd;">8</div>
<div class="t" style="left:26.5px;top:82.5px;font-size:6.5px;color:#bdbdbd;">0</div>
<div class="t" style="left:26.5px;top:89.8px;font-size:6.5px;color:#bdbdbd;">0</div>
<div class="t" style="left:26.5px;top:103.9px;font-size:6.5px;color:#bdbdbd;">6</div>
<div class="t" style="left:26.5px;top:111.2px;font-size:6.5px;color:#bdbdbd;">0</div>
<div class="t" style="left:26.5px;top:118.5px;font-size:6.5px;color:#bdbdbd;">0</div>
<div class="t" style="left:26.5px;top:132.6px;font-size:6.5px;color:#bdbdbd;">4</div>
<div class="t" style="left:26.5px;top:139.9px;font-size:6.5px;color:#bdbdbd;">0</div>
<div class="t" style="left:26.5px;top:147.2px;font-size:6.5px;color:#bdbdbd;">0</div>
<div class="t" style="left:26.5px;top:161.3px;font-size:6.5px;color:#bdbdbd;">2</div>
<div class="t" style="left:26.5px;top:168.6px;font-size:6.5px;color:#bdbdbd;">0</div>
<div class="t" style="left:26.5px;top:175.9px;font-size:6.5px;color:#bdbdbd;">0</div>
<div class="t" style="left:26.5px;top:190.0px;font-size:6.5px;color:#bdbdbd;">0</div>
<div class="t" style="left:26.5px;top:218.7px;font-size:6.5px;color:#bdbdbd;">2</div>
<div class="t" style="left:26.5px;top:226.0px;font-size:6.5px;color:#bdbdbd;">0</div>
<div class="t" style="left:26.5px;top:233.3px;font-size:6.5px;color:#bdbdbd;">0</div>
<div class="t" style="left:26.5px;top:247.4px;font-size:6.5px;color:#bdbdbd;">4</div>
<div class="t" style="left:26.5px;top:254.7px;font-size:6.5px;color:#bdbdbd;">0</div>
<div class="t" style="left:26.5px;top:262.0px;font-size:6.5px;color:#bdbdbd;">0</div>
<div class="t" style="left:26.5px;top:276.1px;font-size:6.5px;color:#bdbdbd;">6</div>
<div class="t" style="left:26.5px;top:283.4px;font-size:6.5px;color:#bdbdbd;">0</div>
<div class="t" style="left:26.5px;top:290.7px;font-size:6.5px;color:#bdbdbd;">0</div>
<div class="t" style="left:26.5px;top:304.8px;font-size:6.5px;color:#bdbdbd;">8</div>
<div class="t" style="left:26.5px;top:312.1px;font-size:6.5px;color:#bdbdbd;">0</div>
<div class="t" style="left:26.5px;top:319.4px;font-size:6.5px;color:#bdbdbd;">0</div>
<div class="t" style="left:32.5px;top:333.0px;font-size:6.8px;color:#b4b4b4;letter-spacing:1.5px;transform:rotate(90deg);transform-origin:0 0">1000</div>
<div class="t" style="left:32.5px;top:361.7px;font-size:6.8px;color:#b4b4b4;letter-spacing:1.5px;transform:rotate(90deg);transform-origin:0 0">1200</div>
<div class="t" style="left:32.5px;top:390.4px;font-size:6.8px;color:#b4b4b4;letter-spacing:1.5px;transform:rotate(90deg);transform-origin:0 0">1400</div>
<div class="t" style="left:32.5px;top:419.1px;font-size:6.8px;color:#b4b4b4;letter-spacing:1.5px;transform:rotate(90deg);transform-origin:0 0">1600</div>
<div class="t" style="left:32.5px;top:447.8px;font-size:6.8px;color:#b4b4b4;letter-spacing:1.5px;transform:rotate(90deg);transform-origin:0 0">1800</div>
<div class="t" style="left:32.5px;top:476.5px;font-size:6.8px;color:#b4b4b4;letter-spacing:1.5px;transform:rotate(90deg);transform-origin:0 0">2000</div>
<div class="t" style="left:32.5px;top:505.2px;font-size:6.8px;color:#b4b4b4;letter-spacing:1.5px;transform:rotate(90deg);transform-origin:0 0">2200</div>
<div class="t" style="left:32.5px;top:533.9px;font-size:6.8px;color:#b4b4b4;letter-spacing:1.5px;transform:rotate(90deg);transform-origin:0 0">2400</div>
<div class="t" style="left:32.5px;top:562.6px;font-size:6.8px;color:#b4b4b4;letter-spacing:1.5px;transform:rotate(90deg);transform-origin:0 0">2600</div>
<div class="t" style="left:32.5px;top:591.3px;font-size:6.8px;color:#b4b4b4;letter-spacing:1.5px;transform:rotate(90deg);transform-origin:0 0">2800</div>
<div class="t" style="left:32.5px;top:620.0px;font-size:6.8px;color:#b4b4b4;letter-spacing:1.5px;transform:rotate(90deg);transform-origin:0 0">3000</div>
<div class="t" style="left:32.5px;top:648.7px;font-size:6.8px;color:#b4b4b4;letter-spacing:1.5px;transform:rotate(90deg);transform-origin:0 0">3200</div>
<div class="t" style="left:32.5px;top:677.4px;font-size:6.8px;color:#b4b4b4;letter-spacing:1.5px;transform:rotate(90deg);transform-origin:0 0">3400</div>
<div class="a" style="left:36px;top:73px;width:823px;height:638px;background:#333333;"></div>
<div class="a" style="left:0px;top:41px;width:24px;height:8px;background:#4a4a4a;"></div>
<svg style="left:2px;top:42px;" width="8" height="5" viewBox="0 0 8 5"><path d="M1 1 L3 2.5 L1 4 M4.5 1 L6.5 2.5 L4.5 4" stroke="#bbb" fill="none" stroke-width="0.9"/></svg>
<div class="a" style="left:1px;top:49px;width:22px;height:2px;background:#3e3e3e;"></div>
<div class="a" style="left:3px;top:61px;width:19px;height:17px;background:#383838;"></div>
<svg style="left:6.0px;top:64.0px;" width="12" height="12" viewBox="0 0 12 12"><g transform="translate(6 6) scale(0.82) translate(-6 -6)"><path d="M6 1V11M1 6H11" stroke="#dedede" stroke-width="1.3"/><path d="M6 0L4.3 2.3H7.7Z M6 12L4.3 9.7H7.7Z M0 6L2.3 4.3V7.7Z M12 6L9.7 4.3V7.7Z" fill="#dedede"/></g></svg>
<svg style="left:19.5px;top:74.5px;" width="2.5" height="2.5" viewBox="0 0 2.5 2.5"><path d="M2.5 0 V2.5 H0Z" fill="#a8a8a8"/></svg>
<svg style="left:6.0px;top:82.0px;" width="12" height="12" viewBox="0 0 12 12"><g transform="translate(6 6) scale(0.82) translate(-6 -6)"><rect x="1" y="2" width="10" height="8" stroke="#dedede" stroke-dasharray="1.5 1" fill="none" stroke-width="1.1"/></g></svg>
<svg style="left:19.5px;top:92.5px;" width="2.5" height="2.5" viewBox="0 0 2.5 2.5"><path d="M2.5 0 V2.5 H0Z" fill="#a8a8a8"/></svg>
<svg style="left:6.0px;top:100.0px;" width="12" height="12" viewBox="0 0 12 12"><g transform="translate(6 6) scale(0.82) translate(-6 -6)"><path d="M2 10 C1 6 3 2 7 2 C10 2 11 5 9 7 C7 9 4 8 4 6 M2 10 L5 11" stroke="#dedede" fill="none" stroke-width="1.2"/></g></svg>
<svg style="left:19.5px;top:110.5px;" width="2.5" height="2.5" viewBox="0 0 2.5 2.5"><path d="M2.5 0 V2.5 H0Z" fill="#a8a8a8"/></svg>
<svg style="left:6.0px;top:117.0px;" width="12" height="12" viewBox="0 0 12 12"><g transform="translate(6 6) scale(0.82) translate(-6 -6)"><rect x="1" y="1" width="6" height="6" fill="#dedede"/><path d="M6 5 L11 10 L8 10 L9 12" stroke="#dedede" fill="none" stroke-width="1.1"/></g></svg>
<svg style="left:19.5px;top:127.5px;" width="2.5" height="2.5" viewBox="0 0 2.5 2.5"><path d="M2.5 0 V2.5 H0Z" fill="#a8a8a8"/></svg>
<svg style="left:6.0px;top:135.0px;" width="12" height="12" viewBox="0 0 12 12"><g transform="translate(6 6) scale(0.82) translate(-6 -6)"><path d="M3 0V9H12 M0 3H9V12" stroke="#dedede" fill="none" stroke-width="1.5"/></g></svg>
<svg style="left:19.5px;top:145.5px;" width="2.5" height="2.5" viewBox="0 0 2.5 2.5"><path d="M2.5 0 V2.5 H0Z" fill="#a8a8a8"/></svg>
<svg style="left:6.0px;top:153.0px;" width="12" height="12" viewBox="0 0 12 12"><g transform="translate(6 6) scale(0.82) translate(-6 -6)"><rect x="1" y="1.5" width="10" height="9" stroke="#dedede" fill="none" stroke-width="1.2"/><path d="M1 1.5L11 10.5M11 1.5L1 10.5" stroke="#dedede" stroke-width="1"/></g></svg>
<svg style="left:19.5px;top:163.5px;" width="2.5" height="2.5" viewBox="0 0 2.5 2.5"><path d="M2.5 0 V2.5 H0Z" fill="#a8a8a8"/></svg>
<svg style="left:6.0px;top:171.0px;" width="12" height="12" viewBox="0 0 12 12"><g transform="translate(6 6) scale(0.82) translate(-6 -6)"><path d="M2 11 L7 6 M6 4 L9 1 L11 3 L8 6 Z" stroke="#dedede" fill="none" stroke-width="1.5"/></g></svg>
<svg style="left:19.5px;top:181.5px;" width="2.5" height="2.5" viewBox="0 0 2.5 2.5"><path d="M2.5 0 V2.5 H0Z" fill="#a8a8a8"/></svg>
<svg style="left:6.0px;top:189.0px;" width="12" height="12" viewBox="0 0 12 12"><g transform="translate(6 6) scale(0.82) translate(-6 -6)"><path d="M1.5 8.5 L8.5 1.5 L10.5 3.5 L3.5 10.5 Z" stroke="#dedede" fill="none" stroke-width="2"/></g></svg>
<svg style="left:19.5px;top:199.5px;" width="2.5" height="2.5" viewBox="0 0 2.5 2.5"><path d="M2.5 0 V2.5 H0Z" fill="#a8a8a8"/></svg>
<svg style="left:6.0px;top:207.0px;" width="12" height="12" viewBox="0 0 12 12"><g transform="translate(6 6) scale(0.82) translate(-6 -6)"><path d="M1 11 C2 8 3 8 4 8 L10 1 L11 2 L5 9 C4 11 2 11 1 11Z" fill="#dedede"/></g></svg>
<svg style="left:19.5px;top:217.5px;" width="2.5" height="2.5" viewBox="0 0 2.5 2.5"><path d="M2.5 0 V2.5 H0Z" fill="#a8a8a8"/></svg>
<svg style="left:6.0px;top:226.0px;" width="12" height="12" viewBox="0 0 12 12"><g transform="translate(6 6) scale(0.82) translate(-6 -6)"><path d="M4 1H8V5L10 7H2L4 5Z" fill="#dedede"/><rect x="1" y="8" width="10" height="2" fill="#dedede"/><rect x="3" y="11" width="6" height="1" fill="#dedede"/></g></svg>
<svg style="left:19.5px;top:236.5px;" width="2.5" height="2.5" viewBox="0 0 2.5 2.5"><path d="M2.5 0 V2.5 H0Z" fill="#a8a8a8"/></svg>
<svg style="left:6.0px;top:244.0px;" width="12" height="12" viewBox="0 0 12 12"><g transform="translate(6 6) scale(0.82) translate(-6 -6)"><path d="M1 11 L6 6 M5 4 L10 1 L11 2 L7 7Z" stroke="#dedede" fill="none" stroke-width="1.4"/><path d="M1 3 A4 4 0 0 1 5 1" stroke="#dedede" fill="none"/></g></svg>
<svg style="left:19.5px;top:254.5px;" width="2.5" height="2.5" viewBox="0 0 2.5 2.5"><path d="M2.5 0 V2.5 H0Z" fill="#a8a8a8"/></svg>
<svg style="left:6.0px;top:262.0px;" width="12" height="12" viewBox="0 0 12 12"><g transform="translate(6 6) scale(0.82) translate(-6 -6)"><path d="M1 8 L6 2 L11 6 L7 11 H3 Z" fill="#dedede"/><path d="M3 11H11" stroke="#dedede"/></g></svg>
<svg style="left:19.5px;top:272.5px;" width="2.5" height="2.5" viewBox="0 0 2.5 2.5"><path d="M2.5 0 V2.5 H0Z" fill="#a8a8a8"/></svg>
<svg style="left:6.0px;top:280.0px;" width="12" height="12" viewBox="0 0 12 12"><g transform="translate(6 6) scale(0.82) translate(-6 -6)"><rect x="1" y="1" width="10" height="10" fill="none" stroke="#dedede"/><rect x="2" y="2" width="8" height="8" fill="url(#gr)"/><defs><linearGradient id="gr"><stop offset="0" stop-color="#555"/><stop offset="1" stop-color="#eee"/></linearGradient></defs></g></svg>
<svg style="left:19.5px;top:290.5px;" width="2.5" height="2.5" viewBox="0 0 2.5 2.5"><path d="M2.5 0 V2.5 H0Z" fill="#a8a8a8"/></svg>
<svg style="left:6.0px;top:298.0px;" width="12" height="12" viewBox="0 0 12 12"><g transform="translate(6 6) scale(0.82) translate(-6 -6)"><path d="M6 0 C3 4 2 6 2 8 A4 4 0 0 0 10 8 C10 6 9 4 6 0Z" fill="#dedede"/></g></svg>
<svg style="left:19.5px;top:308.5px;" width="2.5" height="2.5" viewBox="0 0 2.5 2.5"><path d="M2.5 0 V2.5 H0Z" fill="#a8a8a8"/></svg>
<svg style="left:6.0px;top:316.0px;" width="12" height="12" viewBox="0 0 12 12"><g transform="translate(6 6) scale(0.82) translate(-6 -6)"><circle cx="7" cy="5" r="4" fill="#dedede"/><path d="M4 8 L1 11" stroke="#dedede" stroke-width="2"/></g></svg>
<svg style="left:19.5px;top:326.5px;" width="2.5" height="2.5" viewBox="0 0 2.5 2.5"><path d="M2.5 0 V2.5 H0Z" fill="#a8a8a8"/></svg>
<svg style="left:6.0px;top:335.0px;" width="12" height="12" viewBox="0 0 12 12"><g transform="translate(6 6) scale(0.82) translate(-6 -6)"><path d="M6 0 L10 5 L8 11 H4 L2 5 Z" stroke="#dedede" fill="none" stroke-width="1.3"/><circle cx="6" cy="6" r="1" fill="#dedede"/></g></svg>
<svg style="left:19.5px;top:345.5px;" width="2.5" height="2.5" viewBox="0 0 2.5 2.5"><path d="M2.5 0 V2.5 H0Z" fill="#a8a8a8"/></svg>
<svg style="left:6.0px;top:353.0px;" width="12" height="12" viewBox="0 0 12 12"><g transform="translate(6 6) scale(0.82) translate(-6 -6)"><path d="M1.5 2.5V1H10.5V2.5 M6 1V11 M4 11H8" stroke="#dedede" fill="none" stroke-width="1.6"/></g></svg>
<svg style="left:19.5px;top:363.5px;" width="2.5" height="2.5" viewBox="0 0 2.5 2.5"><path d="M2.5 0 V2.5 H0Z" fill="#a8a8a8"/></svg>
<svg style="left:6.0px;top:371.0px;" width="12" height="12" viewBox="0 0 12 12"><g transform="translate(6 6) scale(0.82) translate(-6 -6)"><path d="M3 0 V11 L5.5 8.5 L8 12 L9 11.5 L7 8 H10.5 Z" fill="#dedede"/></g></svg>
<svg style="left:19.5px;top:381.5px;" width="2.5" height="2.5" viewBox="0 0 2.5 2.5"><path d="M2.5 0 V2.5 H0Z" fill="#a8a8a8"/></svg>
<svg style="left:6.0px;top:388.0px;" width="12" height="12" viewBox="0 0 12 12"><g transform="translate(6 6) scale(0.82) translate(-6 -6)"><rect x="1" y="2" width="10" height="8" stroke="#dedede" fill="none" stroke-width="1.3"/></g></svg>
<svg style="left:19.5px;top:398.5px;" width="2.5" height="2.5" viewBox="0 0 2.5 2.5"><path d="M2.5 0 V2.5 H0Z" fill="#a8a8a8"/></svg>
<svg style="left:6.0px;top:406.0px;" width="12" height="12" viewBox="0 0 12 12"><g transform="translate(6 6) scale(0.82) translate(-6 -6)"><path d="M3 11 C1 8 1 6 2 5 L3 6 V2 H4.5 V5 V1 H6 V5 V1.5 H7.5 V5 V2.5 H9 V7 C9 9 8 11 7 11Z" fill="#dedede"/></g></svg>
<svg style="left:19.5px;top:416.5px;" width="2.5" height="2.5" viewBox="0 0 2.5 2.5"><path d="M2.5 0 V2.5 H0Z" fill="#a8a8a8"/></svg>
<svg style="left:6.0px;top:425.0px;" width="12" height="12" viewBox="0 0 12 12"><g transform="translate(6 6) scale(0.82) translate(-6 -6)"><circle cx="5" cy="5" r="3.8" stroke="#dedede" fill="none" stroke-width="1.4"/><path d="M8 8 L11.5 11.5" stroke="#dedede" stroke-width="1.8"/></g></svg>
<svg style="left:19.5px;top:435.5px;" width="2.5" height="2.5" viewBox="0 0 2.5 2.5"><path d="M2.5 0 V2.5 H0Z" fill="#a8a8a8"/></svg>
<svg style="left:6.0px;top:443.0px;" width="12" height="12" viewBox="0 0 12 12"><g transform="translate(6 6) scale(0.82) translate(-6 -6)"><circle cx="2" cy="6" r="1.1" fill="#dedede"/><circle cx="6" cy="6" r="1.1" fill="#dedede"/><circle cx="10" cy="6" r="1.1" fill="#dedede"/></g></svg>
<svg style="left:4px;top:462px;" width="6" height="6" viewBox="0 0 6 6"><rect x="0" y="0" width="4" height="4" fill="#111" stroke="#dedede" stroke-width="0.8"/><rect x="2" y="2" width="4" height="4" fill="#dedede"/></svg>
<svg style="left:15px;top:461px;" width="6" height="6" viewBox="0 0 6 6"><path d="M0.5 1 H4.5 V5 M3 3.5 L4.5 5 L6 3.5" stroke="#dedede" fill="none" stroke-width="0.9"/></svg>
<div class="a" style="left:9px;top:480px;width:12px;height:13px;background:#f2f2f2;"></div>
<div class="a" style="left:3px;top:474px;width:12px;height:12px;background:#ffffff;border:1px solid #333"></div>
<svg style="left:6.0px;top:499.0px;" width="12" height="12" viewBox="0 0 12 12"><g transform="translate(6 6) scale(0.82) translate(-6 -6)"><rect x="1" y="1" width="10" height="9" stroke="#dedede" fill="none" stroke-width="1.1"/><circle cx="6" cy="5.5" r="2.5" stroke="#dedede" fill="none" stroke-width="1.1"/></g></svg>
<svg style="left:6.0px;top:518.0px;" width="12" height="12" viewBox="0 0 12 12"><g transform="translate(6 6) scale(0.82) translate(-6 -6)"><rect x="1" y="4" width="8" height="7" stroke="#dedede" fill="none" stroke-width="1.1"/><path d="M3 4 V1 H11 V8 H9" stroke="#dedede" fill="none" stroke-width="1.1"/></g></svg>
<div class="a" style="left:859px;top:41px;width:221px;height:679px;background:#4b4b4b;"></div>
<div class="a" style="left:859px;top:41px;width:221px;height:8px;background:#484848;"></div>
<svg style="left:885px;top:43px;" width="8" height="5" viewBox="0 0 8 5"><path d="M3 1 L1 2.5 L3 4 M6.5 1 L4.5 2.5 L6.5 4" stroke="#c8c8c8" fill="none" stroke-width="0.9"/></svg>
<svg style="left:1066px;top:43px;" width="8" height="5" viewBox="0 0 8 5"><path d="M1 1 L3 2.5 L1 4 M4.5 1 L6.5 2.5 L4.5 4" stroke="#c8c8c8" fill="none" stroke-width="0.9"/></svg>
<div class="a" style="left:869px;top:49px;width:2px;height:671px;background:#404040;"></div>
<div class="a" style="left:871px;top:49px;width:24px;height:671px;background:#535353;"></div>
<div class="a" style="left:895px;top:49px;width:1px;height:671px;background:#454545;"></div>
<div class="a" style="left:872px;top:97.5px;width:22px;height:1.5px;background:#464646;"></div>
<div class="a" style="left:872px;top:145px;width:22px;height:1.5px;background:#464646;"></div>
<div class="a" style="left:872px;top:174.5px;width:22px;height:1.5px;background:#464646;"></div>
<div class="a" style="left:872px;top:203px;width:22px;height:1.5px;background:#464646;"></div>
<svg style="left:876px;top:56px;" width="14" height="14" viewBox="0 0 14 14"><path d="M1 2H5M1 4.5H5M1 7H4" stroke="#d8d8d8" stroke-width="1"/><path d="M13 1 L7 8" stroke="#d8d8d8" stroke-width="1.8"/><path d="M7 8 C5 8 4 10 3.5 13 C6 12.5 8 11 8 9Z" fill="#d8d8d8"/></svg>
<svg style="left:876px;top:77px;" width="14" height="13" viewBox="0 0 14 13"><circle cx="4" cy="3" r="2.2" fill="#d8d8d8"/><path d="M1 3H13M1 9.5H13" stroke="#d8d8d8" stroke-width="1.2"/><path d="M13 6 V13 L8 9.5Z" fill="#d8d8d8"/></svg>
<div class="t" style="left:876px;top:106px;font-size:12px;color:#d8d8d8;letter-spacing:-1px">A</div>
<div class="a" style="left:888px;top:106px;width:1px;height:13px;background:#d8d8d8;"></div>
<div class="t" style="left:877px;top:125px;font-size:13px;color:#d8d8d8;font-weight:bold">&#182;</div>
<svg style="left:876px;top:154px;" width="14" height="13" viewBox="0 0 14 13"><path d="M1 12 C3 12 5 9 7 4 C8 2 9 1 11 1 M8 3 L9.5 12 M2 3 C3 1 6 1 7 2 M4 8.5 H10" stroke="#d8d8d8" fill="none" stroke-width="1.3"/></svg>
<svg style="left:877px;top:182px;" width="13" height="13" viewBox="0 0 13 13"><path d="M6.5 0.8 L12 3.5 V9.5 L6.5 12.2 L1 9.5 V3.5Z M1 3.5 L6.5 6.2 L12 3.5 M6.5 6.2V12.2" stroke="#d8d8d8" fill="none" stroke-width="1.1"/></svg>
<div class="a" style="left:896px;top:49px;width:179px;height:336px;background:#535353;"></div>
<div class="a" style="left:896px;top:49px;width:179px;height:19px;background:#434343;"></div>
<div class="t" style="left:900px;top:55px;font-size:7px;color:#a9a9a9;letter-spacing:-0.25px">Swatc</div>
<div class="t" style="left:923px;top:55px;font-size:7px;color:#a9a9a9;letter-spacing:-0.25px">Gradi</div>
<div class="t" style="left:945px;top:55px;font-size:7px;color:#a9a9a9;letter-spacing:-0.25px">Patter</div>
<div class="t" style="left:968px;top:55px;font-size:7px;color:#a9a9a9;letter-spacing:-0.25px">Histo</div>
<div class="t" style="left:990px;top:55px;font-size:7px;color:#a9a9a9;letter-spacing:-0.25px">Actio</div>
<div class="a" style="left:920px;top:51px;width:1px;height:15px;background:#3c3c3c;"></div>
<div class="a" style="left:942px;top:51px;width:1px;height:15px;background:#3c3c3c;"></div>
<div class="a" style="left:965px;top:51px;width:1px;height:15px;background:#3c3c3c;"></div>
<div class="a" style="left:987px;top:51px;width:1px;height:15px;background:#3c3c3c;"></div>
<div class="a" style="left:1008px;top:51px;width:1px;height:15px;background:#3c3c3c;"></div>
<div class="a" style="left:1010px;top:49px;width:40px;height:19px;background:#535353;"></div>
<div class="t" style="left:1013px;top:55px;font-size:7px;color:#f2f2f2;font-weight:bold;letter-spacing:-0.25px">Properties</div>
<svg style="left:1064px;top:56px;" width="8" height="7" viewBox="0 0 8 7"><path d="M0 1H9M0 3.5H9M0 6H9" stroke="#c0c0c0" stroke-width="1.2"/></svg>
<div class="a" style="left:903px;top:73px;width:13px;height:15px;background:#3a3a3a;"></div>
<svg style="left:905px;top:75px;" width="9" height="11" viewBox="0 0 9 11"><path d="M1 0.5 H5.5 L8.5 3.5 V10.5 H1 Z M5.5 0.5 V3.5 H8.5" stroke="#cfcfcf" fill="none" stroke-width="1"/></svg>
<div class="t" style="left:920px;top:78px;font-size:7px;color:#cfcfcf;letter-spacing:-0.2px">Document</div>
<div class="a" style="left:896px;top:92px;width:170px;height:1px;background:#454545;"></div>
<div class="a" style="left:1066px;top:92px;width:8px;height:276px;background:#4a4a4a;"></div>
<div class="a" style="left:1067px;top:104px;width:6px;height:225px;background:#5e5e5e;"></div>
<svg style="left:1067px;top:95px;" width="6" height="4" viewBox="0 0 6 4"><path d="M0.5 3.5 L3 1 L5.5 3.5" stroke="#777" fill="none"/></svg>
<svg style="left:901px;top:100.5px;" width="6" height="4" viewBox="0 0 6 4"><path d="M0.5 0.5 L3 3 L5.5 0.5" stroke="#8a8a8a" fill="none" stroke-width="1"/></svg>
<div class="t" style="left:910px;top:98.5px;font-size:7px;color:#ededed;font-weight:bold;letter-spacing:-0.15px">Canvas</div>
<div class="t" style="left:928px;top:116.5px;font-size:7px;color:#bdbdbd;">W</div>
<div class="t" style="left:929px;top:133.5px;font-size:7px;color:#bdbdbd;">H</div>
<div class="a" style="left:939px;top:113px;width:31px;height:13px;background:#474747;"></div>
<div class="a" style="left:939px;top:130.5px;width:31px;height:13px;background:#474747;"></div>
<div class="t" style="left:942px;top:116.5px;font-size:6.8px;color:#e6e6e6;letter-spacing:-0.3px">2232 px</div>
<div class="t" style="left:942px;top:134px;font-size:6.8px;color:#e6e6e6;letter-spacing:-0.3px">2854 px</div>
<div class="t" style="left:980px;top:116.5px;font-size:7px;color:#bdbdbd;">X</div>
<div class="t" style="left:980px;top:133.5px;font-size:7px;color:#bdbdbd;">Y</div>
<div class="a" style="left:989px;top:113px;width:33px;height:13px;background:#4e4e4e;"></div>
<div class="a" style="left:989px;top:130.5px;width:33px;height:13px;background:#4e4e4e;"></div>
<div class="t" style="left:992px;top:116.5px;font-size:6.5px;color:#6f6f6f;">0 px</div>
<div class="t" style="left:992px;top:134px;font-size:6.5px;color:#6f6f6f;">0 px</div>
<svg style="left:907px;top:123px;" width="6" height="12" viewBox="0 0 6 12"><path d="M3 0.8 A2 2 0 0 1 3 5 A2 2 0 0 1 3 0.8 M3 7 A2 2 0 0 1 3 11.2 A2 2 0 0 1 3 7 M3 4.5 V7.5" stroke="#cfcfcf" fill="none" stroke-width="1.2"/></svg>
<div class="a" style="left:939px;top:151px;width:14px;height:17px;background:#383838;"></div>
<svg style="left:942px;top:153px;" width="8" height="12" viewBox="0 0 8 12"><rect x="0.5" y="0.5" width="7" height="11" stroke="#d0d0d0" fill="none"/><circle cx="4" cy="4" r="1.4" fill="#d0d0d0"/><path d="M1.5 11 V8 C1.5 6.5 6.5 6.5 6.5 8 V11Z" fill="#d0d0d0"/></svg>
<svg style="left:957px;top:154px;" width="12" height="9" viewBox="0 0 12 9"><rect x="0.5" y="0.5" width="11" height="8" stroke="#cfcfcf" fill="none"/><circle cx="6" cy="3.5" r="1.3" fill="#cfcfcf"/><path d="M3 8.5 V6.5 C3 5 9 5 9 6.5 V8.5Z" fill="#cfcfcf"/></svg>
<div class="t" style="left:938px;top:176.5px;font-size:6.8px;color:#d0d0d0;letter-spacing:-0.3px">Resolution: 250 pixels/inch</div>
<div class="t" style="left:916px;top:194.5px;font-size:7px;color:#bdbdbd;">Mode</div>
<div class="a" style="left:939px;top:192px;width:83px;height:13px;background:#474747;"></div>
<div class="t" style="left:943px;top:195.1px;font-size:6.8px;color:#e0e0e0;letter-spacing:-0.3px">RGB Color</div>
<svg style="left:1014px;top:197.0px;" width="6" height="4" viewBox="0 0 6 4"><path d="M0.5 0.5 L3 3 L5.5 0.5" stroke="#9a9a9a" fill="none" stroke-width="1"/></svg>
<div class="a" style="left:939px;top:210px;width:83px;height:13px;background:#474747;"></div>
<div class="t" style="left:943px;top:213.1px;font-size:6.8px;color:#e0e0e0;letter-spacing:-0.3px">16 Bits/Channel</div>
<svg style="left:1014px;top:215.0px;" width="6" height="4" viewBox="0 0 6 4"><path d="M0.5 0.5 L3 3 L5.5 0.5" stroke="#9a9a9a" fill="none" stroke-width="1"/></svg>
<div class="t" style="left:925px;top:232px;font-size:6.8px;color:#bdbdbd;">Fill</div>
<div class="a" style="left:938px;top:229px;width:12px;height:12px;background:#4a4a4a;border:1px solid #5f5f5f"></div>
<div class="a" style="left:953px;top:229px;width:69px;height:13px;background:#474747;"></div>
<div class="t" style="left:957px;top:232.1px;font-size:6.8px;color:#e0e0e0;letter-spacing:-0.3px">Transparent</div>
<svg style="left:1014px;top:234.0px;" width="6" height="4" viewBox="0 0 6 4"><path d="M0.5 0.5 L3 3 L5.5 0.5" stroke="#9a9a9a" fill="none" stroke-width="1"/></svg>
<div class="a" style="left:896px;top:247px;width:170px;height:1px;background:#474747;"></div>
<svg style="left:901px;top:255.5px;" width="6" height="4" viewBox="0 0 6 4"><path d="M0.5 0.5 L3 3 L5.5 0.5" stroke="#8a8a8a" fill="none" stroke-width="1"/></svg>
<div class="t" style="left:910px;top:253.5px;font-size:7px;color:#ededed;font-weight:bold;letter-spacing:-0.15px">Rulers &amp; Grids</div>
<div class="a" style="left:903px;top:270px;width:16px;height:16px;background:#383838;"></div>
<svg style="left:906px;top:273px;" width="10" height="10" viewBox="0 0 10 10"><path d="M0.5 0.5 H9.5 M0.5 0.5 V9.5" stroke="#ddd" stroke-width="2"/><path d="M3 3H9.5M3 3V9.5" stroke="#ddd" stroke-width="1"/></svg>
<svg style="left:925px;top:273px;" width="11" height="11" viewBox="0 0 11 11"><path d="M0.5 0.5H10.5V10.5H0.5Z M4 0.5V10.5 M7 0.5V10.5 M0.5 4H10.5 M0.5 7H10.5" stroke="#bbb" fill="none" stroke-width="0.9"/></svg>
<svg style="left:946px;top:273px;" width="11" height="11" viewBox="0 0 11 11"><rect x="0.5" y="0.5" width="10" height="10" stroke="#aaa" fill="none" stroke-width="0.9" stroke-dasharray="1 1"/><rect x="3" y="3" width="5" height="5" stroke="#aaa" fill="none" stroke-width="0.8" stroke-dasharray="1 1"/></svg>
<div class="a" style="left:975px;top:272px;width:46px;height:13px;background:#474747;"></div>
<div class="t" style="left:979px;top:275.1px;font-size:6.8px;color:#e0e0e0;letter-spacing:-0.3px">Pixels</div>
<svg style="left:1013px;top:277.0px;" width="6" height="4" viewBox="0 0 6 4"><path d="M0.5 0.5 L3 3 L5.5 0.5" stroke="#9a9a9a" fill="none" stroke-width="1"/></svg>
<div class="a" style="left:896px;top:294px;width:170px;height:1px;background:#474747;"></div>
<svg style="left:901px;top:303.5px;" width="6" height="4" viewBox="0 0 6 4"><path d="M0.5 0.5 L3 3 L5.5 0.5" stroke="#8a8a8a" fill="none" stroke-width="1"/></svg>
<div class="t" style="left:910px;top:301.5px;font-size:7px;color:#ededed;font-weight:bold;letter-spacing:-0.15px">Guides</div>
<div class="a" style="left:903px;top:317px;width:16px;height:16px;background:#383838;"></div>
<svg style="left:906px;top:320px;" width="11" height="11" viewBox="0 0 11 11"><path d="M3 0V11 M7 0V11 M0 4H11 M0 7.5H11" stroke="#ccc" stroke-width="1"/></svg>
<svg style="left:925px;top:319px;" width="12" height="12" viewBox="0 0 12 12"><path d="M3 0V11 M7 0V9 M0 4H11 M0 7.5H6" stroke="#bbb" stroke-width="1"/><rect x="7" y="8" width="4" height="3" fill="#ddd"/></svg>
<div class="a" style="left:945px;top:317px;width:16px;height:16px;background:#383838;"></div>
<svg style="left:948px;top:319px;" width="11" height="12" viewBox="0 0 11 12"><path d="M3 0V11 M7 2V11 M0 4H6" stroke="#ccc" stroke-width="1"/><rect x="7" y="8" width="4" height="3" fill="#ddd"/><path d="M8 3 L10 1" stroke="#ccc"/></svg>
<div class="a" style="left:975px;top:319px;width:46px;height:13px;background:#474747;"></div>
<div class="a" style="left:979px;top:325px;width:34px;height:1.5px;background:#cfcfcf;"></div>
<svg style="left:1013px;top:324px;" width="6" height="4" viewBox="0 0 6 4"><path d="M0.5 0.5 L3 3 L5.5 0.5" stroke="#9a9a9a" fill="none" stroke-width="1"/></svg>
<div class="a" style="left:896px;top:341px;width:170px;height:1px;background:#474747;"></div>
<svg style="left:901px;top:350.5px;" width="6" height="4" viewBox="0 0 6 4"><path d="M0.5 0.5 L3 3 L5.5 0.5" stroke="#8a8a8a" fill="none" stroke-width="1"/></svg>
<div class="t" style="left:910px;top:348.5px;font-size:7px;color:#ededed;font-weight:bold;letter-spacing:-0.15px">Quick Actions</div>
<div class="a" style="left:896px;top:385px;width:179px;height:3px;background:#3e3e3e;"></div>
<div class="a" style="left:896px;top:388px;width:179px;height:332px;background:#535353;"></div>
<div class="a" style="left:896px;top:388px;width:179px;height:18px;background:#434343;"></div>
<div class="a" style="left:896px;top:388px;width:30px;height:18px;background:#535353;"></div>
<div class="t" style="left:901px;top:394px;font-size:7px;color:#f0f0f0;font-weight:bold;letter-spacing:-0.2px">Layers</div>
<svg style="left:1064px;top:394px;" width="8" height="7" viewBox="0 0 8 7"><path d="M0 1H9M0 3.5H9M0 6H9" stroke="#c0c0c0" stroke-width="1.2"/></svg>
<div class="a" style="left:899px;top:414px;width:53px;height:13px;background:#454545;"></div>
<svg style="left:902px;top:417px;" width="8" height="8" viewBox="0 0 8 8"><circle cx="3.2" cy="3.2" r="2.4" stroke="#e8e8e8" fill="none" stroke-width="1.2"/><path d="M5 5 L7.5 7.5" stroke="#e8e8e8" stroke-width="1.4"/></svg>
<div class="t" style="left:912px;top:417px;font-size:6.8px;color:#e0e0e0;letter-spacing:-0.2px">Kind</div>
<svg style="left:945px;top:419px;" width="6" height="4" viewBox="0 0 6 4"><path d="M0.5 0.5 L3 3 L5.5 0.5" stroke="#9a9a9a" fill="none" stroke-width="1"/></svg>
<svg style="left:958px;top:416px;" width="10" height="9" viewBox="0 0 10 9"><rect x="0.5" y="0.5" width="9" height="8" stroke="#cfcfcf" fill="none"/><path d="M2 7 L4 4 L6 6 L7 5 L8.5 7Z" fill="#cfcfcf"/></svg>
<svg style="left:973px;top:415px;" width="10" height="10" viewBox="0 0 10 10"><circle cx="5" cy="5" r="4" stroke="#cfcfcf" fill="none"/><path d="M5 1 A4 4 0 0 1 5 9Z" fill="#cfcfcf"/></svg>
<div class="t" style="left:989px;top:414.5px;font-size:10px;color:#cfcfcf;font-family:&quot;Liberation Serif&quot;,serif">T</div>
<svg style="left:1004px;top:415px;" width="10" height="10" viewBox="0 0 10 10"><rect x="2" y="2" width="6" height="6" stroke="#cfcfcf" fill="none"/><path d="M2 0V10M8 0V10M0 2H10M0 8H10" stroke="#cfcfcf" stroke-width="0.8"/></svg>
<svg style="left:1019px;top:415px;" width="9" height="11" viewBox="0 0 9 11"><path d="M0.5 0.5H5.5L8.5 3.5V10.5H0.5Z" stroke="#cfcfcf" fill="none"/><rect x="1.5" y="5" width="6" height="5" fill="#cfcfcf"/></svg>
<svg style="left:1033px;top:410px;" width="8" height="13" viewBox="0 0 8 13"><circle cx="4" cy="4" r="3" fill="#eeeeee"/><rect x="2.5" y="7" width="3" height="5" fill="#3f3f3f" rx="1.5"/></svg>
<div class="a" style="left:896px;top:430px;width:170px;height:1px;background:#4a4a4a;"></div>
<div class="a" style="left:898px;top:433px;width:79px;height:13px;background:#4e4e4e;"></div>
<div class="t" style="left:902px;top:436px;font-size:6.8px;color:#707070;">Normal</div>
<svg style="left:969px;top:438px;" width="6" height="4" viewBox="0 0 6 4"><path d="M0.5 0.5 L3 3 L5.5 0.5" stroke="#666" fill="none" stroke-width="1"/></svg>
<div class="t" style="left:983px;top:436px;font-size:6.8px;color:#6c6c6c;letter-spacing:-0.2px">Opacity:</div>
<div class="a" style="left:1010px;top:433px;width:20px;height:13px;background:#4a4a4a;"></div>
<div class="t" style="left:1012px;top:436px;font-size:6.5px;color:#6a6a6a;letter-spacing:-0.3px">100%</div>
<svg style="left:1033px;top:438px;" width="6" height="4" viewBox="0 0 6 4"><path d="M0.5 0.5 L3 3 L5.5 0.5" stroke="#666" fill="none" stroke-width="1"/></svg>
<div class="a" style="left:896px;top:449px;width:170px;height:1px;background:#4a4a4a;"></div>
<div class="t" style="left:898px;top:455.5px;font-size:6.8px;color:#6c6c6c;letter-spacing:-0.2px">Lock:</div>
<svg style="left:919px;top:454px;" width="9" height="9" viewBox="0 0 9 9"><path d="M0 0H3V3H0Z M6 0H9V3H6Z M3 3H6V6H3Z M0 6H3V9H0Z M6 6H9V9H6Z" fill="#6e6e6e"/></svg>
<svg style="left:933px;top:453px;" width="9" height="11" viewBox="0 0 9 11"><path d="M8.5 0.5 L3 7" stroke="#6e6e6e" stroke-width="1.5"/><path d="M3 7 C1.5 7 1 9 0.5 10.5 C2.5 10 4 9 4 8Z" fill="#6e6e6e"/></svg>
<svg style="left:946px;top:453px;" width="11" height="11" viewBox="0 0 11 11"><path d="M5.5 0.5V10.5M0.5 5.5H10.5" stroke="#6e6e6e" stroke-width="1.1"/><path d="M5.5 0 L4 2H7Z M5.5 11 L4 9H7Z M0 5.5 L2 4V7Z M11 5.5 L9 4V7Z" fill="#6e6e6e"/></svg>
<svg style="left:960px;top:454px;" width="11" height="9" viewBox="0 0 11 9"><path d="M2 0.5V8.5H10.5 M0 2.5H8.5V6" stroke="#6e6e6e" fill="none" stroke-width="1"/></svg>
<svg style="left:975px;top:453px;" width="8" height="10" viewBox="0 0 8 10"><path d="M2 4.5V3 A2 2 0 0 1 6 3 V4.5" stroke="#6e6e6e" fill="none" stroke-width="1.1"/><rect x="0.5" y="4.5" width="7" height="5" fill="#6e6e6e"/></svg>
<div class="t" style="left:992px;top:455.5px;font-size:6.8px;color:#6c6c6c;">Fill:</div>
<div class="a" style="left:1010px;top:452px;width:20px;height:13px;background:#4a4a4a;"></div>
<div class="t" style="left:1012px;top:455.5px;font-size:6.5px;color:#6a6a6a;letter-spacing:-0.3px">100%</div>
<svg style="left:1033px;top:457.5px;" width="6" height="4" viewBox="0 0 6 4"><path d="M0.5 0.5 L3 3 L5.5 0.5" stroke="#666" fill="none" stroke-width="1"/></svg>
<div class="a" style="left:896px;top:467px;width:170px;height:1px;background:#484848;"></div>
<div class="a" style="left:896px;top:486.5px;width:170px;height:1px;background:#4c4c4c;"></div>
<div class="a" style="left:915px;top:468px;width:1px;height:19px;background:#4f4f4f;"></div>
<svg style="left:901px;top:475.5px;" width="10" height="6" viewBox="0 0 10 6"><path d="M0.5 3 C3 -0.5 7 -0.5 9.5 3 C7 6.5 3 6.5 0.5 3Z" stroke="#a8a8a8" fill="none" stroke-width="1"/><circle cx="5" cy="3" r="1.5" fill="#a8a8a8"/></svg>
<svg style="left:925px;top:476.0px;" width="6" height="4" viewBox="0 0 6 4"><path d="M0.5 0.5 L3 3 L5.5 0.5" stroke="#a0a0a0" fill="none" stroke-width="1"/></svg>
<svg style="left:935px;top:473.5px;" width="11" height="8" viewBox="0 0 11 8"><path d="M0.5 0.5H4L5 2H10.5V7.5H0.5Z" fill="#e8e8e8"/></svg>
<div class="t" style="left:951px;top:474.7px;font-size:7px;color:#e6e6e6;letter-spacing:-0.25px">edite text</div>
<div class="a" style="left:896px;top:512.5px;width:170px;height:1px;background:#4c4c4c;"></div>
<div class="a" style="left:915px;top:487px;width:1px;height:26px;background:#4f4f4f;"></div>
<svg style="left:901px;top:498.0px;" width="10" height="6" viewBox="0 0 10 6"><path d="M0.5 3 C3 -0.5 7 -0.5 9.5 3 C7 6.5 3 6.5 0.5 3Z" stroke="#a8a8a8" fill="none" stroke-width="1"/><circle cx="5" cy="3" r="1.5" fill="#a8a8a8"/></svg>
<div class="t" style="left:942px;top:495.0px;font-size:13px;color:#e8e8e8;font-family:&quot;Liberation Serif&quot;,serif">T</div>
<div class="t" style="left:963px;top:498.4px;font-size:7px;color:#e6e6e6;letter-spacing:-0.3px">Layer 2</div>
<div class="a" style="left:896px;top:542.0px;width:170px;height:1px;background:#4c4c4c;"></div>
<div class="a" style="left:915px;top:513px;width:1px;height:29.5px;background:#4f4f4f;"></div>
<svg style="left:901px;top:525.75px;" width="10" height="6" viewBox="0 0 10 6"><path d="M0.5 3 C3 -0.5 7 -0.5 9.5 3 C7 6.5 3 6.5 0.5 3Z" stroke="#a8a8a8" fill="none" stroke-width="1"/><circle cx="5" cy="3" r="1.5" fill="#a8a8a8"/></svg>
<div class="a" style="left:938px;top:519px;width:15px;height:20px;background-color:#fff;background-image:linear-gradient(45deg,#d8d8d8 25%,transparent 25%,transparent 75%,#d8d8d8 75%),linear-gradient(45deg,#d8d8d8 25%,transparent 25%,transparent 75%,#d8d8d8 75%);background-size:4px 4px;background-position:0 0,2px 2px"></div>
<div class="a" style="left:940px;top:521px;width:3px;height:3px;background:#b05050;"></div>
<div class="t" style="left:959px;top:526.15px;font-size:7px;color:#e6e6e6;letter-spacing:-0.25px">Layer 3</div>
<div class="a" style="left:896px;top:570.8px;width:170px;height:1px;background:#4c4c4c;"></div>
<div class="a" style="left:915px;top:542.5px;width:1px;height:28.799999999999955px;background:#4f4f4f;"></div>
<svg style="left:901px;top:554.9px;" width="10" height="6" viewBox="0 0 10 6"><path d="M0.5 3 C3 -0.5 7 -0.5 9.5 3 C7 6.5 3 6.5 0.5 3Z" stroke="#a8a8a8" fill="none" stroke-width="1"/><circle cx="5" cy="3" r="1.5" fill="#a8a8a8"/></svg>
<div class="t" style="left:942px;top:551.9px;font-size:13px;color:#e8e8e8;font-family:&quot;Liberation Serif&quot;,serif">T</div>
<div class="t" style="left:963px;top:555.3px;font-size:7px;color:#e6e6e6;letter-spacing:-0.3px">cilia0000000...&lt;&lt;&lt;&lt;&lt;&lt;&lt;&lt;&lt;0 d</div>
<div class="a" style="left:896px;top:599.1px;width:170px;height:1px;background:#4c4c4c;"></div>
<div class="a" style="left:915px;top:571.3px;width:1px;height:28.300000000000068px;background:#4f4f4f;"></div>
<div class="a" style="left:901px;top:581.45px;width:9px;height:9px;background:#505050;border:1px solid #5a5a5a"></div>
<div class="t" style="left:942px;top:580.45px;font-size:13px;color:#e8e8e8;font-family:&quot;Liberation Serif&quot;,serif">T</div>
<div class="t" style="left:963px;top:583.85px;font-size:7px;color:#e6e6e6;letter-spacing:-0.3px">1ss</div>
<div class="a" style="left:896px;top:627.5px;width:170px;height:1px;background:#4c4c4c;"></div>
<div class="a" style="left:915px;top:599.6px;width:1px;height:28.399999999999977px;background:#4f4f4f;"></div>
<svg style="left:901px;top:611.8px;" width="10" height="6" viewBox="0 0 10 6"><path d="M0.5 3 C3 -0.5 7 -0.5 9.5 3 C7 6.5 3 6.5 0.5 3Z" stroke="#a8a8a8" fill="none" stroke-width="1"/><circle cx="5" cy="3" r="1.5" fill="#a8a8a8"/></svg>
<div class="t" style="left:942px;top:608.8px;font-size:13px;color:#e8e8e8;font-family:&quot;Liberation Serif&quot;,serif">T</div>
<div class="t" style="left:963px;top:612.1999999999999px;font-size:7px;color:#e6e6e6;letter-spacing:-0.3px">169</div>
<div class="a" style="left:896px;top:656.3px;width:170px;height:1px;background:#4c4c4c;"></div>
<div class="a" style="left:915px;top:628px;width:1px;height:28.799999999999955px;background:#4f4f4f;"></div>
<svg style="left:901px;top:640.4px;" width="10" height="6" viewBox="0 0 10 6"><path d="M0.5 3 C3 -0.5 7 -0.5 9.5 3 C7 6.5 3 6.5 0.5 3Z" stroke="#a8a8a8" fill="none" stroke-width="1"/><circle cx="5" cy="3" r="1.5" fill="#a8a8a8"/></svg>
<div class="t" style="left:942px;top:637.4px;font-size:13px;color:#e8e8e8;font-family:&quot;Liberation Serif&quot;,serif">T</div>
<div class="t" style="left:963px;top:640.8px;font-size:7px;color:#e6e6e6;letter-spacing:-0.3px">m</div>
<div class="a" style="left:896px;top:684.5px;width:170px;height:1px;background:#4c4c4c;"></div>
<div class="a" style="left:915px;top:656.8px;width:1px;height:28.200000000000045px;background:#4f4f4f;"></div>
<svg style="left:901px;top:668.9px;" width="10" height="6" viewBox="0 0 10 6"><path d="M0.5 3 C3 -0.5 7 -0.5 9.5 3 C7 6.5 3 6.5 0.5 3Z" stroke="#a8a8a8" fill="none" stroke-width="1"/><circle cx="5" cy="3" r="1.5" fill="#a8a8a8"/></svg>
<div class="t" style="left:942px;top:665.9px;font-size:13px;color:#e8e8e8;font-family:&quot;Liberation Serif&quot;,serif">T</div>
<div class="t" style="left:963px;top:669.3px;font-size:7px;color:#e6e6e6;letter-spacing:-0.3px">129.</div>
<div class="a" style="left:896px;top:704.5px;width:170px;height:1px;background:#4c4c4c;"></div>
<div class="a" style="left:915px;top:685px;width:1px;height:20px;background:#4f4f4f;"></div>
<svg style="left:901px;top:693.0px;" width="10" height="6" viewBox="0 0 10 6"><path d="M0.5 3 C3 -0.5 7 -0.5 9.5 3 C7 6.5 3 6.5 0.5 3Z" stroke="#a8a8a8" fill="none" stroke-width="1"/><circle cx="5" cy="3" r="1.5" fill="#a8a8a8"/></svg>
<div class="t" style="left:942px;top:690.0px;font-size:13px;color:#e8e8e8;font-family:&quot;Liberation Serif&quot;,serif">T</div>
<div class="t" style="left:963px;top:693.4px;font-size:7px;color:#e6e6e6;letter-spacing:-0.3px">01.01.1990</div>
<div class="a" style="left:1066px;top:468px;width:8px;height:237px;background:#4a4a4a;"></div>
<div class="a" style="left:1067px;top:486px;width:6px;height:70px;background:#5e5e5e;"></div>
<svg style="left:1067px;top:472px;" width="6" height="4" viewBox="0 0 6 4"><path d="M0.5 3.5 L3 1 L5.5 3.5" stroke="#777" fill="none"/></svg>
<div class="a" style="left:896px;top:705px;width:179px;height:15px;background:#535353;"></div>
<svg style="left:948px;top:711px;" width="11" height="6" viewBox="0 0 11 6"><path d="M4 0.5H2A2.5 2.5 0 0 0 2 5.5H4 M7 0.5H9A2.5 2.5 0 0 1 9 5.5H7 M3 3H8" stroke="#777" fill="none" stroke-width="1"/></svg>
<div class="t" style="left:966px;top:709px;font-size:8px;color:#9a9a9a;font-style:italic;letter-spacing:-0.3px">fx</div>
<svg style="left:981px;top:709px;" width="11" height="9" viewBox="0 0 11 9"><rect x="0.5" y="0.5" width="10" height="8" stroke="#b8b8b8" fill="none"/><circle cx="5.5" cy="4.5" r="2.5" fill="#b8b8b8"/></svg>
<svg style="left:998px;top:708px;" width="11" height="11" viewBox="0 0 11 11"><circle cx="5" cy="5" r="4.3" stroke="#b8b8b8" fill="none"/><path d="M5 0.7 A4.3 4.3 0 0 0 5 9.3Z" fill="#b8b8b8"/></svg>
<svg style="left:1015px;top:709px;" width="11" height="9" viewBox="0 0 11 9"><path d="M0.5 0.5H4L5 2H10.5V8.5H0.5Z" fill="#e0e0e0"/></svg>
<svg style="left:1032px;top:708px;" width="10" height="11" viewBox="0 0 10 11"><rect x="0.5" y="0.5" width="9" height="10" stroke="#b8b8b8" fill="none"/><path d="M5 3V8M2.5 5.5H7.5" stroke="#b8b8b8"/></svg>
<svg style="left:1049px;top:708px;" width="9" height="11" viewBox="0 0 9 11"><path d="M0 1.5H9 M3 1.5V0.5H6V1.5 M1 2.5V10.5H8V2.5 M3.5 4V9 M5.5 4V9" stroke="#888" fill="none"/></svg>
<div class="a" style="left:1075px;top:41px;width:1px;height:679px;background:#3f3f3f;"></div>
<div class="a" style="left:1076px;top:41px;width:4px;height:679px;background:#575757;"></div>
<div class="a" style="left:303px;top:187px;width:289px;height:410px;background-color:#fff;background-image:linear-gradient(45deg,#cbcbcb 25%,transparent 25%,transparent 75%,#cbcbcb 75%),linear-gradient(45deg,#cbcbcb 25%,transparent 25%,transparent 75%,#cbcbcb 75%);background-size:10px 10px;background-position:0 0,5px 5px"></div>
<div class="a" style="left:322.5px;top:73px;width:1.6px;height:638px;background:rgba(110,225,215,.68);"></div>
<div class="a" style="left:571.5px;top:73px;width:1.6px;height:638px;background:rgba(110,225,215,.68);"></div>
<div class="a" style="left:36px;top:209.5px;width:823px;height:1.6px;background:rgba(110,225,215,.68);"></div>
<div class="a" style="left:36px;top:574.5px;width:823px;height:1.6px;background:rgba(110,225,215,.68);"></div>
<div class="a" style="left:351px;top:214px;width:378px;height:292px;background:#ffffff;"></div>
<div class="a" style="left:363px;top:238px;width:76px;height:26px;background:#1d7a3e;"></div>
<div class="t" style="left:370px;top:246.10px;font-size:9.6px;color:#f2fff6;font-weight:bold;letter-spacing:-0.1px">Şekerbank</div>
<svg style="left:420.3px;top:245.1px;" width="12" height="12" viewBox="0 0 12 12"><g fill="none" stroke="#eafff0" stroke-width="1.25"><path d="M0.6 5.6 A5 5 0 0 1 5.6 0.6 V3.1 H10.8"/><path d="M0.4 5.6 H10.9"/><path d="M0.4 8.1 H5.6 V10.6 A5 5 0 0 0 10.6 5.6"/></g></svg>
<div class="t" style="left:363px;top:266.30px;font-size:6.2px;color:#111;font-weight:bold;letter-spacing:-0.22px">76 Kocasinan,Sanayi</div>
<div class="t" style="left:363px;top:274.30px;font-size:6.2px;color:#111;font-weight:bold;letter-spacing:-0.15px">Turkey 6004</div>
<div class="t" style="left:395px;top:237.40px;width:300px;text-align:right;font-size:6px;color:#2f6a4a;font-weight:bold;font-style:italic;letter-spacing:-0.39px">Statement generation date and time 15/07/2019 12:41</div>
<div class="t" style="left:395px;top:243.80px;width:300px;text-align:right;font-size:6px;color:#2f6a4a;font-weight:bold;font-style:italic;letter-spacing:-0.45px">Statement Nr 15</div>
<div class="a" style="left:351px;top:283px;width:378px;height:1px;background:#e6e6de;"></div>
<div class="a" style="left:355px;top:465px;width:370px;height:1px;background:#ebebe2;"></div>
<div class="a" style="left:547.5px;top:347px;width:168.5px;height:7.5px;background:#c6d8a0;"></div>
<div class="a" style="left:547.5px;top:376px;width:168.5px;height:7px;background:#c6d8a0;"></div>
<div class="a" style="left:547.5px;top:390px;width:168.5px;height:7px;background:#c6d8a0;"></div>
<div class="a" style="left:547.5px;top:404.5px;width:168.5px;height:7.5px;background:#c6d8a0;"></div>
<div class="a" style="left:364px;top:419px;width:352px;height:8px;background:#c6d8a0;"></div>
<div class="a" style="left:364px;top:294px;width:184px;height:1px;background:#707070;"></div>
<div class="a" style="left:364px;top:300.5px;width:184px;height:1px;background:#cacaca;"></div>
<div class="a" style="left:364px;top:307px;width:184px;height:1px;background:#cacaca;"></div>
<div class="a" style="left:364px;top:314px;width:184px;height:1px;background:#707070;"></div>
<div class="a" style="left:364px;top:320px;width:184px;height:1.3px;background:#2a2a2a;"></div>
<div class="a" style="left:364px;top:326.8px;width:184px;height:1px;background:#cacaca;"></div>
<div class="a" style="left:364px;top:333.5px;width:184px;height:1px;background:#cacaca;"></div>
<div class="a" style="left:364px;top:347px;width:352px;height:1px;background:#707070;"></div>
<div class="a" style="left:364px;top:354px;width:352px;height:1.2px;background:#2a2a2a;"></div>
<div class="a" style="left:364px;top:361px;width:352px;height:1.3px;background:#2a2a2a;"></div>
<div class="a" style="left:364px;top:383px;width:184px;height:1px;background:#cacaca;"></div>
<div class="a" style="left:364px;top:397.5px;width:184px;height:1px;background:#cacaca;"></div>
<div class="a" style="left:364px;top:412px;width:352px;height:1.2px;background:#2a2a2a;"></div>
<div class="a" style="left:364px;top:419px;width:352px;height:1px;background:#707070;"></div>
<div class="a" style="left:364px;top:427px;width:352px;height:1px;background:#707070;"></div>
<div class="a" style="left:364px;top:441px;width:352px;height:1px;background:#707070;"></div>
<div class="a" style="left:364px;top:294px;width:1px;height:147px;background:#707070;"></div>
<div class="a" style="left:438px;top:294px;width:1px;height:118px;background:#707070;"></div>
<div class="a" style="left:547.5px;top:294px;width:1px;height:125px;background:#707070;"></div>
<div class="a" style="left:716px;top:347px;width:1px;height:94px;background:#707070;"></div>
<div class="a" style="left:659px;top:347px;width:1px;height:80px;background:#707070;"></div>
<div class="a" style="left:601.5px;top:354px;width:1px;height:14px;background:#707070;"></div>
<div class="t" style="left:367px;top:295.40px;font-size:5px;color:#2c2c2c;letter-spacing:-0.1px">Name, Surname</div>
<div class="t" style="left:367px;top:301.90px;font-size:5px;color:#2c2c2c;">Address</div>
<div class="t" style="left:367px;top:308.70px;font-size:5px;color:#2c2c2c;letter-spacing:-0.1px">Statement period</div>
<div class="t" style="left:368px;top:315.40px;font-size:5px;color:#2c2c2c;">Account number</div>
<div class="t" style="left:367px;top:321.80px;font-size:5px;color:#2c2c2c;font-weight:bold;letter-spacing:-0.2px">Date of statement</div>
<div class="t" style="left:367px;top:328.30px;font-size:5px;color:#2c2c2c;">Account currency</div>
<div class="t" style="left:367px;top:335.40px;font-size:5px;color:#2c2c2c;letter-spacing:-0.05px">Interest amount received since</div>
<div class="t" style="left:367px;top:341.70px;font-size:5px;color:#2c2c2c;letter-spacing:-0.05px">of the beginning of deposit**</div>
<div class="t" style="left:186px;top:295.40px;width:600px;text-align:center;font-size:5px;color:#2c2c2c;">John Citizen</div>
<div class="t" style="left:186px;top:308.70px;width:600px;text-align:center;font-size:5px;color:#2c2c2c;">01/06/2019 - 29/06/2019</div>
<div class="t" style="left:186px;top:315.40px;width:600px;text-align:center;font-size:5px;color:#2c2c2c;">8541332569587411</div>
<div class="t" style="left:186px;top:321.70px;width:600px;text-align:center;font-size:5.2px;color:#2c2c2c;font-weight:bold;letter-spacing:-0.1px">15/07/2019</div>
<div class="t" style="left:186px;top:328.30px;width:600px;text-align:center;font-size:5px;color:#2c2c2c;">USD</div>
<div class="t" style="left:186px;top:341.70px;width:600px;text-align:center;font-size:5px;color:#2c2c2c;">0.00</div>
<div class="t" style="left:367px;top:356.10px;font-size:5px;color:#2c2c2c;font-weight:bold;letter-spacing:-0.1px">Transaction date</div>
<div class="t" style="left:442px;top:356.10px;font-size:5px;color:#2c2c2c;font-weight:bold;letter-spacing:-0.1px">Transaction details</div>
<div class="t" style="left:366.5px;top:363.30px;font-size:5.6px;color:#2c2c2c;font-weight:bold;font-style:italic;">01/06/19 - 02/06/19</div>
<div class="t" style="left:366.5px;top:384.80px;font-size:5.6px;color:#2c2c2c;font-weight:bold;font-style:italic;">09/06/19 - 11/06/19</div>
<div class="t" style="left:366.5px;top:399.80px;font-size:5.6px;color:#2c2c2c;font-weight:bold;font-style:italic;">15/06/19 -16/06/19</div>
<div class="t" style="left:441.5px;top:363.55px;font-size:5.1px;color:#2c2c2c;font-weight:bold;font-style:italic;">Utility payment via internet banking</div>
<div class="t" style="left:441.5px;top:385.05px;font-size:5.1px;color:#2c2c2c;font-weight:bold;font-style:italic;">Utility payment via internet banking</div>
<div class="t" style="left:441.5px;top:400.05px;font-size:5.1px;color:#2c2c2c;font-weight:bold;font-style:italic;">Online payment via internet banking</div>
<div class="t" style="left:568.5px;top:348.80px;font-size:5.2px;color:#2c2c2c;font-weight:bold;letter-spacing:0.05px">Opening&nbsp;&nbsp;balance as of 01/06/2019</div>
<div class="t" style="left:663px;top:348.90px;font-size:5px;color:#2c2c2c;font-weight:bold;">1500.00</div>
<div class="t" style="left:267px;top:356.10px;width:600px;text-align:center;font-size:5px;color:#2c2c2c;font-weight:bold">Credits</div>
<div class="t" style="left:332.5px;top:356.10px;width:600px;text-align:center;font-size:5px;color:#2c2c2c;font-weight:bold">Debits</div>
<div class="t" style="left:387px;top:356.10px;width:600px;text-align:center;font-size:5px;color:#2c2c2c;font-weight:bold;letter-spacing:-0.1px">End of day balance</div>
<div class="t" style="left:269px;top:363.10px;width:600px;text-align:center;font-size:4px;color:#555;">-</div>
<div class="t" style="left:331px;top:363.10px;width:600px;text-align:center;font-size:4px;color:#555;">-</div>
<div class="t" style="left:395px;top:363.10px;width:600px;text-align:center;font-size:4px;color:#555;">-</div>
<div class="t" style="left:303px;top:370.10px;width:600px;text-align:center;font-size:5px;color:#2c2c2c;font-weight:bold;font-style:italic;">Transaction amount</div>
<div class="t" style="left:387.5px;top:370.10px;width:600px;text-align:center;font-size:5px;color:#2c2c2c;font-weight:bold;font-style:italic;">Posting amount</div>
<div class="t" style="left:303px;top:384.60px;width:600px;text-align:center;font-size:5px;color:#2c2c2c;font-weight:bold;font-style:italic;">Transaction amount</div>
<div class="t" style="left:387.5px;top:384.60px;width:600px;text-align:center;font-size:5px;color:#2c2c2c;font-weight:bold;font-style:italic;">Posting amount</div>
<div class="t" style="left:303px;top:398.60px;width:600px;text-align:center;font-size:5px;color:#2c2c2c;font-weight:bold;font-style:italic;">Transaction amount</div>
<div class="t" style="left:387.5px;top:398.60px;width:600px;text-align:center;font-size:5px;color:#2c2c2c;font-weight:bold;font-style:italic;">Posting amount</div>
<div class="t" style="left:303px;top:377.60px;width:600px;text-align:center;font-size:5px;color:#2c2c2c;font-weight:bold;font-style:italic;">450.54 USD</div>
<div class="t" style="left:385px;top:377.60px;width:600px;text-align:center;font-size:5px;color:#2c2c2c;font-weight:bold;font-style:italic;">-450.54 USD</div>
<div class="t" style="left:303px;top:391.60px;width:600px;text-align:center;font-size:5px;color:#2c2c2c;font-weight:bold;font-style:italic;">260.25 USD</div>
<div class="t" style="left:385px;top:391.60px;width:600px;text-align:center;font-size:5px;color:#2c2c2c;font-weight:bold;font-style:italic;">-260.25 USD</div>
<div class="t" style="left:303px;top:406.40px;width:600px;text-align:center;font-size:5px;color:#2c2c2c;font-weight:bold;font-style:italic;">150.36 USD</div>
<div class="t" style="left:385px;top:406.40px;width:600px;text-align:center;font-size:5px;color:#2c2c2c;font-weight:bold;font-style:italic;">-150.36 USD</div>
<div class="t" style="left:155.5px;top:413.90px;width:600px;text-align:center;font-size:5px;color:#2c2c2c;font-weight:bold;">Total flow</div>
<div class="t" style="left:357px;top:421.10px;width:300px;text-align:right;font-size:5px;color:#2c2c2c;font-weight:bold;">Closing balance as of 20/06/2019</div>
<div class="t" style="left:662.5px;top:421.10px;font-size:5px;color:#2c2c2c;font-weight:bold;">300.20</div>
<div class="t" style="left:240px;top:429.36px;width:600px;text-align:center;font-size:5.08px;color:#2c2c2c;font-weight:bold;font-style:italic;">For more information and statement inquiries please call +90 352 320 74 34 Mon - Fri, from 09:00 to 19:00, Saturday from 11:00 to 14:00, or</div>
<div class="t" style="left:240px;top:435.66px;width:600px;text-align:center;font-size:5.08px;color:#2c2c2c;font-weight:bold;font-style:italic;">contact us by online consultant at&nbsp; www.sekerbank.com</div>
<div class="a" style="left:25px;top:711px;width:834px;height:9px;background:#4f4f4f;"></div>
<div class="t" style="left:29px;top:712.5px;font-size:6.5px;color:#d8d8d8;letter-spacing:-0.3px">20.66%</div>
<div class="a" style="left:55px;top:711px;width:1px;height:9px;background:#454545;"></div>
<div class="t" style="left:70px;top:712.5px;font-size:6.5px;color:#cfcfcf;letter-spacing:-0.3px">2232 px x 2854 px (250 ppi)</div>
<svg style="left:164px;top:713px;" width="4" height="6" viewBox="0 0 4 6"><path d="M0.5 0.5 L3 3 L0.5 5.5" stroke="#bbb" fill="none"/></svg>
<svg style="left:850px;top:655px;" width="230" height="50" viewBox="0 0 230 50"><path d="M21.00 12.00 L9.10 12.00 L9.10 41.00 L21.00 41.00" stroke="#1c1c1c" stroke-width="2.1" fill="none" stroke-linecap="butt"/><path d="M9.10 26.50 L19.50 26.50" stroke="#1c1c1c" stroke-width="2.1" fill="none" stroke-linecap="butt"/><path d="M28.00 11.00 L28.00 42.00" stroke="#1c1c1c" stroke-width="2.1" fill="none" stroke-linecap="butt"/><path d="M44.00 11.50 L28.50 29.00" stroke="#1c1c1c" stroke-width="2.1" fill="none" stroke-linecap="butt"/><path d="M34.00 22.50 L44.50 42.00" stroke="#1c1c1c" stroke-width="2.1" fill="none" stroke-linecap="butt"/><path d="M67.20 26.60 L67.08 24.33 L66.71 22.12 L66.11 20.02 L65.29 18.08 L64.27 16.35 L63.08 14.87 L61.74 13.68 L60.29 12.81 L58.76 12.28 L57.20 12.10 L55.64 12.28 L54.11 12.81 L52.66 13.68 L51.32 14.87 L50.13 16.35 L49.11 18.08 L48.29 20.02 L47.69 22.12 L47.32 24.33 L47.20 26.60 L47.32 28.87 L47.69 31.08 L48.29 33.18 L49.11 35.12 L50.13 36.85 L51.32 38.33 L52.66 39.52 L54.11 40.39 L55.64 40.92 L57.20 41.10 L58.76 40.92 L60.29 40.39 L61.74 39.52 L63.08 38.33 L64.27 36.85 L65.29 35.12 L66.11 33.18 L66.71 31.08 L67.08 28.87 L67.20 26.60" stroke="#1c1c1c" stroke-width="2.1" fill="none" stroke-linecap="butt"/><path d="M91.26 17.28 L90.29 15.82 L89.19 14.58 L87.98 13.57 L86.69 12.81 L85.34 12.32 L83.95 12.11 L82.55 12.18 L81.18 12.53 L79.85 13.16 L78.60 14.04 L77.44 15.17 L76.41 16.53 L75.51 18.08 L74.77 19.79 L74.20 21.64 L73.82 23.59 L73.62 25.59 L73.62 27.61 L73.82 29.61 L74.20 31.56 L74.77 33.41 L75.51 35.12 L76.41 36.67 L77.44 38.03 L78.60 39.16 L79.85 40.04 L81.18 40.67 L82.55 41.02 L83.95 41.09 L85.34 40.88 L86.69 40.39 L87.98 39.63 L89.19 38.62 L90.29 37.38 L91.26 35.92 L92.08 34.28 L92.74 32.50 L93.21 30.60 L93.50 28.62 L93.60 26.60" stroke="#1c1c1c" stroke-width="2.1" fill="none" stroke-linecap="butt"/><path d="M84.50 26.80 L93.60 26.80" stroke="#1c1c1c" stroke-width="2.1" fill="none" stroke-linecap="butt"/><path d="M111.00 12.00 L99.10 12.00 L99.10 41.00 L111.00 41.00" stroke="#1c1c1c" stroke-width="2.1" fill="none" stroke-linecap="butt"/><path d="M99.10 26.50 L109.50 26.50" stroke="#1c1c1c" stroke-width="2.1" fill="none" stroke-linecap="butt"/><path d="M118.00 42.00 L127.20 11.00 L136.60 42.00" stroke="#1c1c1c" stroke-width="2.1" fill="none" stroke-linecap="butt"/><path d="M121.50 31.00 L133.00 31.00" stroke="#1c1c1c" stroke-width="2.1" fill="none" stroke-linecap="butt"/><path d="M170.40 26.60 L170.27 24.33 L169.88 22.12 L169.24 20.02 L168.38 18.08 L167.30 16.35 L166.03 14.87 L164.61 13.68 L163.08 12.81 L161.46 12.28 L159.80 12.10 L158.14 12.28 L156.52 12.81 L154.99 13.68 L153.57 14.87 L152.30 16.35 L151.22 18.08 L150.36 20.02 L149.72 22.12 L149.33 24.33 L149.20 26.60 L149.33 28.87 L149.72 31.08 L150.36 33.18 L151.22 35.12 L152.30 36.85 L153.57 38.33 L154.99 39.52 L156.52 40.39 L158.14 40.92 L159.80 41.10 L161.46 40.92 L163.08 40.39 L164.61 39.52 L166.03 38.33 L167.30 36.85 L168.38 35.12 L169.24 33.18 L169.88 31.08 L170.27 28.87 L170.40 26.60" stroke="#7ea31e" stroke-width="2.1" fill="none" stroke-linecap="butt"/><path d="M178.40 42.00 L178.40 12.10 L185.50 12.10 C 196 12.100000000000023 196 27 185.5 27 L 178.4000000000001 27" stroke="#7ea31e" stroke-width="2.1" fill="none" stroke-linecap="butt"/><path d="M185.50 27.00 L193.60 42.00" stroke="#7ea31e" stroke-width="2.1" fill="none" stroke-linecap="butt"/><path d="M216.24 17.28 L215.23 15.82 L214.07 14.58 L212.80 13.57 L211.44 12.81 L210.02 12.32 L208.57 12.11 L207.10 12.18 L205.66 12.53 L204.27 13.16 L202.95 14.04 L201.74 15.17 L200.65 16.53 L199.71 18.08 L198.93 19.79 L198.33 21.64 L197.93 23.59 L197.73 25.59 L197.73 27.61 L197.93 29.61 L198.33 31.56 L198.93 33.41 L199.71 35.12 L200.65 36.67 L201.74 38.03 L202.95 39.16 L204.27 40.04 L205.66 40.67 L207.10 41.02 L208.57 41.09 L210.02 40.88 L211.44 40.39 L212.80 39.63 L214.07 38.62 L215.23 37.38 L216.24 35.92 L217.10 34.28 L217.79 32.50 L218.29 30.60 L218.60 28.62 L218.70 26.60" stroke="#7ea31e" stroke-width="2.1" fill="none" stroke-linecap="butt"/><path d="M209.00 26.80 L218.30 26.80" stroke="#7ea31e" stroke-width="2.1" fill="none" stroke-linecap="butt"/><circle cx="143.39999999999998" cy="40.200000000000045" r="1.7" fill="#1c1c1c"/></svg></body></html>
